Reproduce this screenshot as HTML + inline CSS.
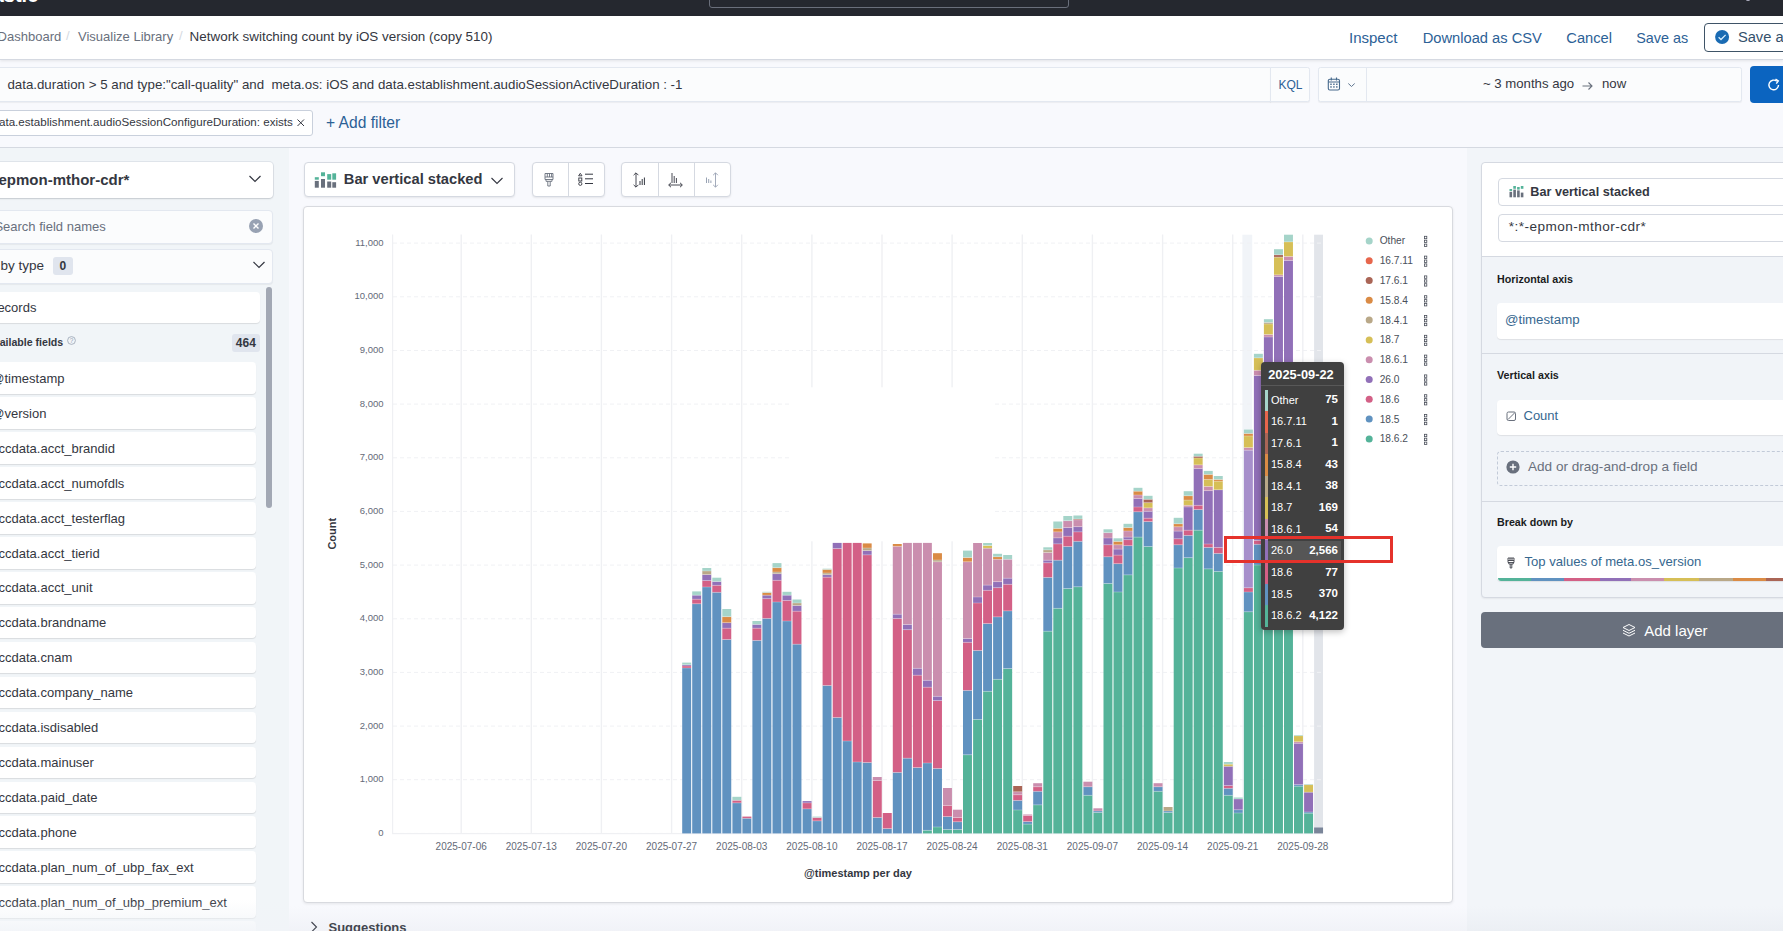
<!DOCTYPE html>
<html><head><meta charset="utf-8"><style>*{box-sizing:border-box;margin:0;padding:0}
html,body{width:1783px;height:931px;overflow:hidden;background:#f8f9fd;font-family:"Liberation Sans",sans-serif;color:#343741;position:relative}
.a{position:absolute;white-space:pre}
#hdr{position:absolute;left:0;top:0;width:1783px;height:16px;background:#25282f;overflow:hidden}
#crumb{position:absolute;left:0;top:16px;width:1783px;height:44px;background:#fff;border-bottom:1px solid #d5d9e1;box-shadow:0 1px 3px rgba(0,0,0,.09);z-index:2}
#qarea{position:absolute;left:0;top:60px;width:1783px;height:88px;background:#f8f9fd;border-bottom:1px solid #d5d9e1}
.box{position:absolute;background:#fbfcfd;border:1px solid #e3e8f0;box-shadow:0 1px 1px rgba(0,0,0,.05)}
#left{position:absolute;left:0;top:148px;width:289px;height:783px;background:#f1f5f8}
#right{position:absolute;left:1467px;top:148px;width:316px;height:783px;background:#f2f5f9}
.card{position:absolute;background:#fff;border-radius:4px;box-shadow:0 1px 2px rgba(0,0,0,.12),0 0 0 1px rgba(152,162,179,.18)}
.fi{position:absolute;left:-6px;width:262px;height:31.7px;background:#fff;border-radius:4px;box-shadow:0 1px 1px rgba(0,0,0,.10)}
.fi span{position:absolute;left:-2.7px;top:8.5px;font-size:13px;color:#343741;white-space:pre}
.tt{position:absolute;left:1261.4px;top:361.8px;width:82.6px;height:268.4px;background:#404040;border-radius:4px;box-shadow:0 2px 6px rgba(0,0,0,.25);color:#fff}
.tth{position:absolute;left:6.8px;top:4.8px;font-size:12.8px;font-weight:700;white-space:pre}
.ttd{position:absolute;left:0;top:23px;width:82.6px;height:1px;background:#585858}
.ttr{position:absolute;left:0;width:82.6px;height:21.55px}
.ttr i{position:absolute;left:3.2px;top:0;width:3.2px;height:21.6px}
.ttr .n{position:absolute;left:9.6px;top:4px;font-size:11px;white-space:pre}
.ttr .v{position:absolute;right:6px;top:3.6px;font-size:11.5px;font-weight:700;white-space:pre}
.ttr.hl{background:transparent}
.ttr.hl:before{content:"";position:absolute;left:6.4px;top:1px;width:72.8px;height:18.2px;background:#565656}
.ttr.hl .n,.ttr.hl .v{z-index:1}
.redbox{position:absolute;left:1224px;top:536px;width:169px;height:27px;border:3.7px solid #e5322b}
.lnk{color:#2c6196}
.btn{position:absolute;background:#fff;border:1px solid #d5d9e1;border-radius:4px;box-shadow:0 1px 2px rgba(0,0,0,.08)}
</style></head>
<body>
<div id="hdr">
  <div class="a" style="left:-24px;top:-16px;font-size:20px;font-weight:700;color:#fff">elastic</div><div style="position:absolute;left:1746px;top:-2px;width:4px;height:3px;border-radius:2px;background:#aab"></div>
  <div style="position:absolute;left:709px;top:-20px;width:360px;height:27.5px;border:1px solid #6a6f7b;border-radius:3px;background:#25282f"></div>
</div>
<div id="crumb">
  <div class="a" style="left:-2.4px;top:13px;font-size:13px;color:#69707d">Dashboard</div>
  <div class="a" style="left:66px;top:12px;font-size:13px;color:#d5d9e1">/</div>
  <div class="a" style="left:78px;top:13px;font-size:13px;color:#69707d">Visualize Library</div>
  <div class="a" style="left:179px;top:12px;font-size:13px;color:#d5d9e1">/</div>
  <div class="a" style="left:189.6px;top:13px;font-size:13.43px;color:#343741">Network switching count by iOS version (copy 510)</div>
  <div class="a lnk" style="left:1349px;top:13.3px;font-size:15px">Inspect</div>
  <div class="a lnk" style="left:1422.7px;top:14px;font-size:14.7px">Download as CSV</div>
  <div class="a lnk" style="left:1566.3px;top:14px;font-size:14.7px">Cancel</div>
  <div class="a lnk" style="left:1636.2px;top:14px;font-size:14.4px">Save as</div>
  <div style="position:absolute;left:1704px;top:7.4px;width:100px;height:28.6px;border:1.3px solid #3f5467;border-radius:4px;background:#fff"></div>
  <svg style="position:absolute;left:1715px;top:14px" width="15" height="15"><circle cx="7.1" cy="7" r="7" fill="#1a6bb3"/><path d="M3.6 7.2 L6 9.5 L10.6 4.9" stroke="#d9f0ff" stroke-width="1.3" fill="none"/></svg>
  <div class="a" style="left:1737.9px;top:13px;font-size:14.7px;color:#34506b">Save as</div>
</div>
<div id="qarea">
  <div class="box" style="left:-6px;top:7px;width:1277px;height:35px;border-radius:4px 0 0 4px"></div>
  <div class="a" style="left:7.4px;top:17px;font-size:13.3px;color:#343741">data.duration &gt; 5 and type:"call-quality" and  meta.os: iOS and data.establishment.audioSessionActiveDuration : -1</div>
  <div class="box" style="left:1270px;top:7px;width:40px;height:35px;border-radius:0 2.5px 2.5px 0"></div>
  <div class="a lnk" style="left:1278.5px;top:17.5px;font-size:12px">KQL</div>
  <div class="box" style="left:1318px;top:7px;width:424px;height:35px;border-radius:2.5px"></div>
  <div style="position:absolute;left:1366px;top:8px;width:1px;height:33px;background:#e3e8f0"></div>
  <svg style="position:absolute;left:1327px;top:16px" width="36" height="18">
    <rect x="1.3" y="3.2" width="11.2" height="10.8" rx="1.6" fill="none" stroke="#46698c" stroke-width="1.1"/>
    <line x1="1.3" y1="6" x2="12.5" y2="6" stroke="#46698c" stroke-width="1"/>
    <path d="M4.3 1.6 V4.4 M9.5 1.6 V4.4" stroke="#46698c" stroke-width="1.1"/>
    <g fill="#46698c"><rect x="3.2" y="7.6" width="1.6" height="1.3"/><rect x="6.1" y="7.6" width="1.6" height="1.3"/><rect x="9" y="7.6" width="1.6" height="1.3"/><rect x="3.2" y="10.3" width="1.6" height="1.3"/><rect x="6.1" y="10.3" width="1.6" height="1.3"/><rect x="9" y="10.3" width="1.6" height="1.3"/></g>
    <path d="M21.3 7.5 L24.5 10.5 L27.7 7.5" stroke="#5e7590" stroke-width="1" fill="none"/>
  </svg>
  <div class="a" style="left:1482.9px;top:16.3px;font-size:13.2px;color:#343741">~ 3 months ago</div>
  <svg style="position:absolute;left:1581px;top:19.5px" width="14" height="12"><path d="M1.5 6 H11 M7.5 2.5 L11 6 L7.5 9.5" stroke="#69707d" stroke-width="1.1" fill="none"/></svg>
  <div class="a" style="left:1602px;top:16.3px;font-size:13.2px;color:#343741">now</div>
  <div style="position:absolute;left:1750px;top:6px;width:50px;height:37px;background:#0b64c0;border-radius:4px"></div>
  <svg style="position:absolute;left:1766px;top:17px" width="16" height="16"><path d="M12.5 8 A4.8 4.8 0 1 1 10.8 4.3" stroke="#fff" stroke-width="1.4" fill="none"/><path d="M9.5 2.2 L12.3 4 L10.3 6.6" stroke="#fff" stroke-width="1.4" fill="none"/></svg>
  <div style="position:absolute;left:-6px;top:50px;width:319px;height:26px;background:#fff;border:1px solid #c9d0dc;border-radius:3px"></div>
  <div class="a" style="left:-1px;top:55px;font-size:11.6px;color:#343741">ata.establishment.audioSessionConfigureDuration: exists</div>
  <svg style="position:absolute;left:296px;top:58px" width="10" height="10"><path d="M1.5 1.5 L8 8 M8 1.5 L1.5 8" stroke="#343741" stroke-width="1"/></svg>
  <div class="a lnk" style="left:326px;top:53.5px;font-size:15.6px">+ Add filter</div>
</div>

<div id="left">
  <div class="card" style="left:-6px;top:14.3px;width:279.3px;height:35.3px"></div>
  <div class="a" style="left:-1.5px;top:22.8px;font-size:15px;font-weight:700;color:#343741">epmon-mthor-cdr*</div>
  <svg style="position:absolute;left:248px;top:26px" width="14" height="10"><path d="M1.5 2 L7 7.5 L12.5 2" stroke="#343741" stroke-width="1.2" fill="none"/></svg>
  <div class="box" style="left:-6px;top:61.5px;width:279.3px;height:34.6px;border-radius:4px"></div>
  <div class="a" style="left:-5.6px;top:71.3px;font-size:13px;color:#69707d">Search field names</div>
  <svg style="position:absolute;left:248.9px;top:71px" width="14" height="14"><circle cx="7" cy="7" r="7" fill="#98a2b3"/><path d="M4.5 4.5 L9.5 9.5 M9.5 4.5 L4.5 9.5" stroke="#fff" stroke-width="1.4"/></svg>
  <div class="box" style="left:-6px;top:100.5px;width:279.3px;height:35px;border-radius:4px"></div>
  <div class="a" style="left:-33.3px;top:110px;font-size:13.5px;color:#343741">Filter by type</div>
  <div style="position:absolute;left:53.4px;top:109.1px;width:20.1px;height:17.5px;background:#e0e5ee;border-radius:3px"></div>
  <div class="a" style="left:59.5px;top:110.5px;font-size:12px;font-weight:700;color:#343741">0</div>
  <svg style="position:absolute;left:252px;top:112px" width="14" height="10"><path d="M1.5 2 L7 7.5 L12.5 2" stroke="#343741" stroke-width="1.2" fill="none"/></svg>
  <div style="position:absolute;left:266.3px;top:139.4px;width:5.7px;height:221px;background:#a2a8b4;border-radius:3px"></div>
  <div class="fi" style="top:143.5px;width:265.8px"><span style="left:-6px">Records</span></div>
  <div class="a" style="left:-13.5px;top:187.8px;font-size:10.6px;font-weight:700;color:#343741">Available fields</div>
  <svg style="position:absolute;left:66.5px;top:188px" width="10" height="10"><circle cx="4.5" cy="4.5" r="3.9" fill="none" stroke="#98a2b3" stroke-width="0.8"/><text x="4.5" y="6.8" font-size="6.5" text-anchor="middle" fill="#98a2b3" font-family="Liberation Sans">?</text></svg>
  <div style="position:absolute;left:231.8px;top:185.8px;width:28px;height:18px;background:#e0e5ee;border-radius:3px"></div>
  <div class="a" style="left:235.8px;top:188px;font-size:12px;font-weight:700;color:#343741">464</div>
  <div class="fi" style="top:214.3px"><span>@timestamp</span></div><div class="fi" style="top:249.2px"><span>@version</span></div><div class="fi" style="top:284.2px"><span>accdata.acct_brandid</span></div><div class="fi" style="top:319.1px"><span>accdata.acct_numofdls</span></div><div class="fi" style="top:354.0px"><span>accdata.acct_testerflag</span></div><div class="fi" style="top:389.0px"><span>accdata.acct_tierid</span></div><div class="fi" style="top:423.9px"><span>accdata.acct_unit</span></div><div class="fi" style="top:458.8px"><span>accdata.brandname</span></div><div class="fi" style="top:493.7px"><span>accdata.cnam</span></div><div class="fi" style="top:528.7px"><span>accdata.company_name</span></div><div class="fi" style="top:563.6px"><span>accdata.isdisabled</span></div><div class="fi" style="top:598.5px"><span>accdata.mainuser</span></div><div class="fi" style="top:633.5px"><span>accdata.paid_date</span></div><div class="fi" style="top:668.4px"><span>accdata.phone</span></div><div class="fi" style="top:703.3px"><span>accdata.plan_num_of_ubp_fax_ext</span></div><div class="fi" style="top:738.2px"><span>accdata.plan_num_of_ubp_premium_ext</span></div><div class="fi" style="top:773.2px"><span>accdata.plan_num_of_ubp_std_ext</span></div>
  <div style="position:absolute;left:0;top:752px;width:289px;height:31px;background:linear-gradient(rgba(241,244,248,0),rgba(241,244,248,.85))"></div>
</div>



<!-- center toolbar -->
<div class="btn" style="left:303.7px;top:162.4px;width:211.7px;height:34.6px"></div>
<svg style="position:absolute;left:314px;top:171px" width="24" height="18">
  <g fill="#54B399"><rect x="0.8" y="6.2" width="4" height="2.5"/><rect x="7" y="1.3" width="4" height="3.9"/><rect x="13.2" y="3.1" width="4" height="5.6"/><rect x="18.3" y="2.3" width="3.8" height="6.4"/></g>
  <g fill="#69707d"><rect x="0.8" y="9.9" width="4" height="6.8"/><rect x="7" y="8" width="4" height="8.7"/><rect x="13.2" y="10.5" width="4" height="6.2"/><rect x="18.3" y="11.2" width="3.8" height="5.5"/></g>
</svg>
<div class="a" style="left:343.8px;top:171.2px;font-size:14.68px;font-weight:700;color:#343741">Bar vertical stacked</div>
<svg style="position:absolute;left:490px;top:176px" width="14" height="10"><path d="M1.5 2 L7 7.5 L12.5 2" stroke="#343741" stroke-width="1.1" fill="none"/></svg>

<div class="btn" style="left:531.8px;top:162.4px;width:73.4px;height:34.6px"></div>
<div style="position:absolute;left:568.3px;top:163px;width:1px;height:33.4px;background:#d5d9e1"></div>
<div class="btn" style="left:620.7px;top:162.4px;width:110.5px;height:34.6px"></div>
<div style="position:absolute;left:657.5px;top:163px;width:1px;height:33.4px;background:#d5d9e1"></div>
<div style="position:absolute;left:694.2px;top:163px;width:1px;height:33.4px;background:#d5d9e1"></div>
<svg style="position:absolute;left:541px;top:172px" width="16" height="16">
  <path d="M4 1.5 H12 V7.5 H4 Z M4 5 H12 M6.3 1.5 V5 M8.5 1.5 V5 M10.6 1.5 V5 M5 7.5 V9.3 H11 V7.5 M6.8 9.3 V14 H9.2 V9.3" stroke="#69707d" stroke-width="0.9" fill="none"/>
</svg>
<svg style="position:absolute;left:578px;top:172px" width="18" height="16">
  <path d="M2.3 1.3 L4 3.8 H0.6 Z" stroke="#343741" stroke-width="0.9" fill="none"/>
  <rect x="0.8" y="6" width="3" height="3" stroke="#343741" stroke-width="0.9" fill="none"/>
  <circle cx="2.3" cy="11.8" r="1.6" stroke="#343741" stroke-width="0.9" fill="none"/>
  <path d="M7 2.2 H15 M7 6.8 H15 M7 11.5 H15" stroke="#343741" stroke-width="1"/>
</svg>
<svg style="position:absolute;left:630px;top:171px" width="18" height="18">
  <path d="M6 2 V16 M3.6 4.2 L6 1.8 L8.4 4.2 M3.6 13.8 L6 16.2 L8.4 13.8" stroke="#343741" stroke-width="0.9" fill="none"/>
  <path d="M10 10 V14 M12.2 8 V14 M14.4 6.5 V14" stroke="#343741" stroke-width="1"/>
</svg>
<svg style="position:absolute;left:667px;top:171px" width="18" height="18">
  <path d="M5 2 V12 M7.2 5 V12 M9.4 7 V12 M2 14 H15 M4 11.8 L1.6 14 L4 16.2 M13 11.8 L15.4 14 L13 16.2" stroke="#343741" stroke-width="0.9" fill="none"/>
</svg>
<svg style="position:absolute;left:704px;top:171px" width="18" height="18">
  <path d="M11.5 2 V16 M9.1 4.2 L11.5 1.8 L13.9 4.2 M9.1 13.8 L11.5 16.2 L13.9 13.8" stroke="#98a2b3" stroke-width="0.9" fill="none"/>
  <path d="M2.5 6.5 V12 M4.7 8 V12 M6.9 9.5 V12" stroke="#98a2b3" stroke-width="1"/>
</svg>

<!-- chart panel -->
<div style="position:absolute;left:303.2px;top:205.5px;width:1149.8px;height:697.6px;background:#fff;border:1px solid #d8dadf;border-radius:4px;box-shadow:0 1px 3px rgba(0,0,0,.08)"></div>
<svg width="1783" height="931" style="position:absolute;left:0;top:0;font-family:'Liberation Sans',sans-serif"><rect x="1242.4" y="234.7" width="9.8" height="598.7" fill="#f1f4f8"/><rect x="1314.1" y="234.7" width="8.9" height="598.7" fill="#e2e5ea"/><line x1="393" y1="833.4" x2="1323" y2="833.4" stroke="#f0f1f4" stroke-width="1" stroke-dasharray="4 3"/><line x1="393" y1="779.7" x2="1323" y2="779.7" stroke="#f0f1f4" stroke-width="1" stroke-dasharray="4 3"/><line x1="393" y1="726.1" x2="1323" y2="726.1" stroke="#f0f1f4" stroke-width="1" stroke-dasharray="4 3"/><line x1="393" y1="672.4" x2="1323" y2="672.4" stroke="#f0f1f4" stroke-width="1" stroke-dasharray="4 3"/><line x1="393" y1="618.8" x2="1323" y2="618.8" stroke="#f0f1f4" stroke-width="1" stroke-dasharray="4 3"/><line x1="393" y1="565.1" x2="1323" y2="565.1" stroke="#f0f1f4" stroke-width="1" stroke-dasharray="4 3"/><line x1="393" y1="511.4" x2="1323" y2="511.4" stroke="#f0f1f4" stroke-width="1" stroke-dasharray="4 3"/><line x1="393" y1="457.8" x2="1323" y2="457.8" stroke="#f0f1f4" stroke-width="1" stroke-dasharray="4 3"/><line x1="393" y1="404.1" x2="1323" y2="404.1" stroke="#f0f1f4" stroke-width="1" stroke-dasharray="4 3"/><line x1="393" y1="350.5" x2="1323" y2="350.5" stroke="#f0f1f4" stroke-width="1" stroke-dasharray="4 3"/><line x1="393" y1="296.8" x2="1323" y2="296.8" stroke="#f0f1f4" stroke-width="1" stroke-dasharray="4 3"/><line x1="393" y1="243.1" x2="1323" y2="243.1" stroke="#f0f1f4" stroke-width="1" stroke-dasharray="4 3"/><rect x="460.5" y="234.5" width="1.4" height="598.9" fill="#eff0f3"/><rect x="530.6" y="234.5" width="1.4" height="598.9" fill="#eff0f3"/><rect x="600.7" y="234.5" width="1.4" height="598.9" fill="#eff0f3"/><rect x="670.9" y="234.5" width="1.4" height="598.9" fill="#eff0f3"/><rect x="741.0" y="234.5" width="1.4" height="598.9" fill="#eff0f3"/><rect x="811.2" y="234.5" width="1.4" height="598.9" fill="#eff0f3"/><rect x="881.3" y="234.5" width="1.4" height="598.9" fill="#eff0f3"/><rect x="951.4" y="234.5" width="1.4" height="598.9" fill="#eff0f3"/><rect x="1021.6" y="234.5" width="1.4" height="598.9" fill="#eff0f3"/><rect x="1091.7" y="234.5" width="1.4" height="598.9" fill="#eff0f3"/><rect x="1161.9" y="234.5" width="1.4" height="598.9" fill="#eff0f3"/><rect x="1232.0" y="234.5" width="1.4" height="598.9" fill="#eff0f3"/><rect x="1302.1" y="234.5" width="1.4" height="598.9" fill="#eff0f3"/><rect x="392" y="234.5" width="1.2" height="598.9" fill="#eff0f3"/><rect x="392" y="833.0" width="931" height="1.2" fill="#eff0f3"/><rect x="791" y="387.3" width="203.5" height="154" fill="#fff"/><rect x="682.2" y="668.0" width="8.95" height="165.4" fill="#6092C0"/><rect x="682.2" y="666.0" width="8.95" height="2.0" fill="#D36086"/><rect x="682.2" y="664.8" width="8.95" height="1.2" fill="#9170B8"/><rect x="682.2" y="662.6" width="8.95" height="2.2" fill="#A5D4C9"/><rect x="692.2" y="603.8" width="8.95" height="229.6" fill="#6092C0"/><rect x="692.2" y="599.2" width="8.95" height="4.6" fill="#D36086"/><rect x="692.2" y="595.2" width="8.95" height="4.0" fill="#9170B8"/><rect x="692.2" y="591.4" width="8.95" height="3.8" fill="#A5D4C9"/><rect x="702.3" y="587.0" width="8.95" height="246.4" fill="#6092C0"/><rect x="702.3" y="580.6" width="8.95" height="6.4" fill="#D36086"/><rect x="702.3" y="574.6" width="8.95" height="6.0" fill="#9170B8"/><rect x="702.3" y="571.0" width="8.95" height="3.6" fill="#B9A888"/><rect x="702.3" y="568.0" width="8.95" height="3.0" fill="#A5D4C9"/><rect x="712.3" y="592.3" width="8.95" height="241.1" fill="#6092C0"/><rect x="712.3" y="585.3" width="8.95" height="7.0" fill="#D36086"/><rect x="712.3" y="581.5" width="8.95" height="3.8" fill="#9170B8"/><rect x="712.3" y="577.7" width="8.95" height="3.8" fill="#A5D4C9"/><rect x="722.3" y="639.5" width="8.95" height="193.9" fill="#6092C0"/><rect x="722.3" y="628.2" width="8.95" height="11.3" fill="#D36086"/><rect x="722.3" y="622.7" width="8.95" height="5.5" fill="#9170B8"/><rect x="722.3" y="616.7" width="8.95" height="6.0" fill="#DA8B45"/><rect x="722.3" y="609.0" width="8.95" height="7.7" fill="#A5D4C9"/><rect x="732.4" y="802.9" width="8.95" height="30.5" fill="#6092C0"/><rect x="732.4" y="800.3" width="8.95" height="2.6" fill="#D36086"/><rect x="732.4" y="796.8" width="8.95" height="3.5" fill="#A5D4C9"/><rect x="742.4" y="818.3" width="8.95" height="15.1" fill="#6092C0"/><rect x="742.4" y="816.6" width="8.95" height="1.7" fill="#D36086"/><rect x="752.4" y="640.4" width="8.95" height="193.0" fill="#6092C0"/><rect x="752.4" y="628.2" width="8.95" height="12.2" fill="#D36086"/><rect x="752.4" y="624.4" width="8.95" height="3.8" fill="#9170B8"/><rect x="752.4" y="621.0" width="8.95" height="3.4" fill="#A5D4C9"/><rect x="762.4" y="618.4" width="8.95" height="215.0" fill="#6092C0"/><rect x="762.4" y="598.7" width="8.95" height="19.7" fill="#D36086"/><rect x="762.4" y="595.2" width="8.95" height="3.5" fill="#9170B8"/><rect x="762.4" y="592.6" width="8.95" height="2.6" fill="#DA8B45"/><rect x="762.4" y="591.8" width="8.95" height="0.8" fill="#A5D4C9"/><rect x="772.5" y="602.0" width="8.95" height="231.4" fill="#6092C0"/><rect x="772.5" y="580.3" width="8.95" height="21.7" fill="#D36086"/><rect x="772.5" y="573.7" width="8.95" height="6.6" fill="#9170B8"/><rect x="772.5" y="572.0" width="8.95" height="1.7" fill="#B9A888"/><rect x="772.5" y="567.7" width="8.95" height="4.3" fill="#DA8B45"/><rect x="772.5" y="563.1" width="8.95" height="4.6" fill="#A5D4C9"/><rect x="782.5" y="621.0" width="8.95" height="212.4" fill="#6092C0"/><rect x="782.5" y="600.4" width="8.95" height="20.6" fill="#D36086"/><rect x="782.5" y="595.2" width="8.95" height="5.2" fill="#9170B8"/><rect x="782.5" y="591.8" width="8.95" height="3.4" fill="#A5D4C9"/><rect x="792.5" y="644.2" width="8.95" height="189.2" fill="#6092C0"/><rect x="792.5" y="611.2" width="8.95" height="33.0" fill="#D36086"/><rect x="792.5" y="605.5" width="8.95" height="5.7" fill="#9170B8"/><rect x="792.5" y="603.0" width="8.95" height="2.5" fill="#B9A888"/><rect x="792.5" y="599.5" width="8.95" height="3.5" fill="#A5D4C9"/><rect x="802.6" y="808.9" width="8.95" height="24.5" fill="#6092C0"/><rect x="802.6" y="802.9" width="8.95" height="6.0" fill="#D36086"/><rect x="802.6" y="801.1" width="8.95" height="1.8" fill="#9170B8"/><rect x="812.6" y="820.9" width="8.95" height="12.5" fill="#6092C0"/><rect x="812.6" y="817.5" width="8.95" height="3.4" fill="#D36086"/><rect x="812.6" y="816.6" width="8.95" height="0.9" fill="#A5D4C9"/><rect x="822.6" y="685.5" width="8.95" height="147.9" fill="#6092C0"/><rect x="822.6" y="577.2" width="8.95" height="108.3" fill="#D36086"/><rect x="822.6" y="574.7" width="8.95" height="2.5" fill="#9170B8"/><rect x="822.6" y="573.0" width="8.95" height="1.7" fill="#B9A888"/><rect x="822.6" y="569.5" width="8.95" height="3.5" fill="#DA8B45"/><rect x="822.6" y="568.7" width="8.95" height="0.8" fill="#A5D4C9"/><rect x="832.7" y="717.5" width="8.95" height="115.9" fill="#6092C0"/><rect x="832.7" y="548.6" width="8.95" height="168.9" fill="#D36086"/><rect x="832.7" y="542.9" width="8.95" height="5.7" fill="#9170B8"/><rect x="842.7" y="741.0" width="8.95" height="92.4" fill="#6092C0"/><rect x="842.7" y="542.9" width="8.95" height="198.1" fill="#D36086"/><rect x="852.7" y="762.0" width="8.95" height="71.4" fill="#6092C0"/><rect x="852.7" y="542.9" width="8.95" height="219.1" fill="#D36086"/><rect x="862.7" y="762.5" width="8.95" height="70.9" fill="#6092C0"/><rect x="862.7" y="554.9" width="8.95" height="207.6" fill="#D36086"/><rect x="862.7" y="550.6" width="8.95" height="4.3" fill="#9170B8"/><rect x="862.7" y="548.0" width="8.95" height="2.6" fill="#B9A888"/><rect x="862.7" y="543.4" width="8.95" height="4.6" fill="#DA8B45"/><rect x="872.8" y="817.5" width="8.95" height="15.9" fill="#6092C0"/><rect x="872.8" y="780.5" width="8.95" height="37.0" fill="#D36086"/><rect x="872.8" y="777.0" width="8.95" height="3.5" fill="#CA8EAE"/><rect x="882.8" y="828.6" width="8.95" height="4.8" fill="#6092C0"/><rect x="882.8" y="813.0" width="8.95" height="15.6" fill="#D36086"/><rect x="892.8" y="772.4" width="8.95" height="61.0" fill="#6092C0"/><rect x="892.8" y="618.5" width="8.95" height="153.9" fill="#D36086"/><rect x="892.8" y="614.2" width="8.95" height="4.3" fill="#9170B8"/><rect x="892.8" y="546.3" width="8.95" height="67.9" fill="#CA8EAE"/><rect x="892.8" y="544.0" width="8.95" height="2.3" fill="#DA8B45"/><rect x="902.9" y="758.2" width="8.95" height="75.2" fill="#6092C0"/><rect x="902.9" y="629.7" width="8.95" height="128.5" fill="#D36086"/><rect x="902.9" y="624.5" width="8.95" height="5.2" fill="#9170B8"/><rect x="902.9" y="542.9" width="8.95" height="81.6" fill="#CA8EAE"/><rect x="912.9" y="767.6" width="8.95" height="65.8" fill="#6092C0"/><rect x="912.9" y="675.2" width="8.95" height="92.4" fill="#D36086"/><rect x="912.9" y="668.3" width="8.95" height="6.9" fill="#9170B8"/><rect x="912.9" y="542.9" width="8.95" height="125.4" fill="#CA8EAE"/><rect x="922.9" y="830.3" width="8.95" height="3.1" fill="#54B399"/><rect x="922.9" y="763.0" width="8.95" height="67.3" fill="#6092C0"/><rect x="922.9" y="687.2" width="8.95" height="75.8" fill="#D36086"/><rect x="922.9" y="680.3" width="8.95" height="6.9" fill="#9170B8"/><rect x="922.9" y="542.9" width="8.95" height="137.4" fill="#CA8EAE"/><rect x="933.0" y="827.0" width="8.95" height="6.4" fill="#54B399"/><rect x="933.0" y="768.5" width="8.95" height="58.5" fill="#6092C0"/><rect x="933.0" y="700.6" width="8.95" height="67.9" fill="#D36086"/><rect x="933.0" y="696.3" width="8.95" height="4.3" fill="#9170B8"/><rect x="933.0" y="561.8" width="8.95" height="134.5" fill="#CA8EAE"/><rect x="933.0" y="560.0" width="8.95" height="1.8" fill="#B9A888"/><rect x="933.0" y="553.2" width="8.95" height="6.8" fill="#DA8B45"/><rect x="943.0" y="829.5" width="8.95" height="3.9" fill="#54B399"/><rect x="943.0" y="816.6" width="8.95" height="12.9" fill="#6092C0"/><rect x="943.0" y="805.4" width="8.95" height="11.2" fill="#D36086"/><rect x="943.0" y="788.0" width="8.95" height="17.4" fill="#CA8EAE"/><rect x="953.0" y="829.5" width="8.95" height="3.9" fill="#54B399"/><rect x="953.0" y="821.8" width="8.95" height="7.7" fill="#6092C0"/><rect x="953.0" y="817.5" width="8.95" height="4.3" fill="#D36086"/><rect x="953.0" y="809.7" width="8.95" height="7.8" fill="#CA8EAE"/><rect x="963.0" y="754.8" width="8.95" height="78.6" fill="#54B399"/><rect x="963.0" y="690.4" width="8.95" height="64.4" fill="#6092C0"/><rect x="963.0" y="642.3" width="8.95" height="48.1" fill="#D36086"/><rect x="963.0" y="638.5" width="8.95" height="3.8" fill="#9170B8"/><rect x="963.0" y="561.8" width="8.95" height="76.7" fill="#CA8EAE"/><rect x="963.0" y="557.5" width="8.95" height="4.3" fill="#DA8B45"/><rect x="963.0" y="550.6" width="8.95" height="6.9" fill="#A5D4C9"/><rect x="973.1" y="719.4" width="8.95" height="114.0" fill="#54B399"/><rect x="973.1" y="650.5" width="8.95" height="68.9" fill="#6092C0"/><rect x="973.1" y="603.0" width="8.95" height="47.5" fill="#D36086"/><rect x="973.1" y="597.0" width="8.95" height="6.0" fill="#9170B8"/><rect x="973.1" y="543.0" width="8.95" height="54.0" fill="#CA8EAE"/><rect x="983.1" y="691.3" width="8.95" height="142.1" fill="#54B399"/><rect x="983.1" y="623.6" width="8.95" height="67.7" fill="#6092C0"/><rect x="983.1" y="590.3" width="8.95" height="33.3" fill="#D36086"/><rect x="983.1" y="585.1" width="8.95" height="5.2" fill="#9170B8"/><rect x="983.1" y="548.2" width="8.95" height="36.9" fill="#CA8EAE"/><rect x="983.1" y="545.6" width="8.95" height="2.6" fill="#D6BF57"/><rect x="983.1" y="543.0" width="8.95" height="2.6" fill="#A5D4C9"/><rect x="993.1" y="679.3" width="8.95" height="154.1" fill="#54B399"/><rect x="993.1" y="616.9" width="8.95" height="62.4" fill="#6092C0"/><rect x="993.1" y="587.7" width="8.95" height="29.2" fill="#D36086"/><rect x="993.1" y="581.7" width="8.95" height="6.0" fill="#9170B8"/><rect x="993.1" y="559.3" width="8.95" height="22.4" fill="#CA8EAE"/><rect x="993.1" y="556.8" width="8.95" height="2.5" fill="#DA8B45"/><rect x="993.1" y="553.8" width="8.95" height="3.0" fill="#A5D4C9"/><rect x="1003.2" y="668.6" width="8.95" height="164.8" fill="#54B399"/><rect x="1003.2" y="610.9" width="8.95" height="57.7" fill="#6092C0"/><rect x="1003.2" y="584.3" width="8.95" height="26.6" fill="#D36086"/><rect x="1003.2" y="578.2" width="8.95" height="6.1" fill="#9170B8"/><rect x="1003.2" y="559.3" width="8.95" height="18.9" fill="#CA8EAE"/><rect x="1003.2" y="555.0" width="8.95" height="4.3" fill="#A5D4C9"/><rect x="1013.2" y="810.0" width="8.95" height="23.4" fill="#54B399"/><rect x="1013.2" y="800.4" width="8.95" height="9.6" fill="#6092C0"/><rect x="1013.2" y="794.8" width="8.95" height="5.6" fill="#D36086"/><rect x="1013.2" y="791.8" width="8.95" height="3.0" fill="#CA8EAE"/><rect x="1013.2" y="786.0" width="8.95" height="5.8" fill="#AA6556"/><rect x="1023.2" y="824.1" width="8.95" height="9.3" fill="#54B399"/><rect x="1023.2" y="821.6" width="8.95" height="2.5" fill="#6092C0"/><rect x="1023.2" y="815.5" width="8.95" height="6.1" fill="#D36086"/><rect x="1023.2" y="814.5" width="8.95" height="1.0" fill="#CA8EAE"/><rect x="1033.2" y="804.9" width="8.95" height="28.5" fill="#54B399"/><rect x="1033.2" y="791.3" width="8.95" height="13.6" fill="#6092C0"/><rect x="1033.2" y="786.8" width="8.95" height="4.5" fill="#D36086"/><rect x="1033.2" y="783.2" width="8.95" height="3.6" fill="#CA8EAE"/><rect x="1043.3" y="631.2" width="8.95" height="202.2" fill="#54B399"/><rect x="1043.3" y="577.4" width="8.95" height="53.8" fill="#6092C0"/><rect x="1043.3" y="562.8" width="8.95" height="14.6" fill="#D36086"/><rect x="1043.3" y="560.2" width="8.95" height="2.6" fill="#9170B8"/><rect x="1043.3" y="552.5" width="8.95" height="7.7" fill="#CA8EAE"/><rect x="1043.3" y="549.9" width="8.95" height="2.6" fill="#B9A888"/><rect x="1043.3" y="547.3" width="8.95" height="2.6" fill="#A5D4C9"/><rect x="1053.3" y="608.3" width="8.95" height="225.1" fill="#54B399"/><rect x="1053.3" y="560.2" width="8.95" height="48.1" fill="#6092C0"/><rect x="1053.3" y="543.9" width="8.95" height="16.3" fill="#D36086"/><rect x="1053.3" y="537.9" width="8.95" height="6.0" fill="#9170B8"/><rect x="1053.3" y="531.9" width="8.95" height="6.0" fill="#CA8EAE"/><rect x="1053.3" y="528.4" width="8.95" height="3.5" fill="#DA8B45"/><rect x="1053.3" y="521.5" width="8.95" height="6.9" fill="#A5D4C9"/><rect x="1063.3" y="588.6" width="8.95" height="244.8" fill="#54B399"/><rect x="1063.3" y="546.5" width="8.95" height="42.1" fill="#6092C0"/><rect x="1063.3" y="536.2" width="8.95" height="10.3" fill="#D36086"/><rect x="1063.3" y="527.6" width="8.95" height="8.6" fill="#9170B8"/><rect x="1063.3" y="520.7" width="8.95" height="6.9" fill="#CA8EAE"/><rect x="1063.3" y="516.0" width="8.95" height="4.7" fill="#A5D4C9"/><rect x="1073.4" y="586.8" width="8.95" height="246.6" fill="#54B399"/><rect x="1073.4" y="541.3" width="8.95" height="45.5" fill="#6092C0"/><rect x="1073.4" y="531.9" width="8.95" height="9.4" fill="#D36086"/><rect x="1073.4" y="526.7" width="8.95" height="5.2" fill="#9170B8"/><rect x="1073.4" y="519.8" width="8.95" height="6.9" fill="#CA8EAE"/><rect x="1073.4" y="519.0" width="8.95" height="0.8" fill="#AA6556"/><rect x="1073.4" y="515.5" width="8.95" height="3.5" fill="#A5D4C9"/><rect x="1083.4" y="795.3" width="8.95" height="38.1" fill="#54B399"/><rect x="1083.4" y="786.8" width="8.95" height="8.5" fill="#6092C0"/><rect x="1083.4" y="781.7" width="8.95" height="5.1" fill="#CA8EAE"/><rect x="1093.4" y="812.5" width="8.95" height="20.9" fill="#54B399"/><rect x="1093.4" y="811.0" width="8.95" height="1.5" fill="#6092C0"/><rect x="1093.4" y="808.3" width="8.95" height="2.7" fill="#CA8EAE"/><rect x="1103.5" y="583.5" width="8.95" height="249.9" fill="#54B399"/><rect x="1103.5" y="556.8" width="8.95" height="26.7" fill="#6092C0"/><rect x="1103.5" y="544.8" width="8.95" height="12.0" fill="#D36086"/><rect x="1103.5" y="538.0" width="8.95" height="6.8" fill="#9170B8"/><rect x="1103.5" y="532.7" width="8.95" height="5.3" fill="#CA8EAE"/><rect x="1103.5" y="529.3" width="8.95" height="3.4" fill="#A5D4C9"/><rect x="1113.5" y="592.0" width="8.95" height="241.4" fill="#54B399"/><rect x="1113.5" y="563.7" width="8.95" height="28.3" fill="#6092C0"/><rect x="1113.5" y="555.1" width="8.95" height="8.6" fill="#D36086"/><rect x="1113.5" y="549.1" width="8.95" height="6.0" fill="#9170B8"/><rect x="1113.5" y="544.8" width="8.95" height="4.3" fill="#CA8EAE"/><rect x="1113.5" y="541.4" width="8.95" height="3.4" fill="#DA8B45"/><rect x="1113.5" y="538.3" width="8.95" height="3.1" fill="#A5D4C9"/><rect x="1123.5" y="574.9" width="8.95" height="258.5" fill="#54B399"/><rect x="1123.5" y="545.7" width="8.95" height="29.2" fill="#6092C0"/><rect x="1123.5" y="539.7" width="8.95" height="6.0" fill="#D36086"/><rect x="1123.5" y="537.1" width="8.95" height="2.6" fill="#9170B8"/><rect x="1123.5" y="531.0" width="8.95" height="6.1" fill="#CA8EAE"/><rect x="1123.5" y="527.6" width="8.95" height="3.4" fill="#DA8B45"/><rect x="1123.5" y="523.8" width="8.95" height="3.8" fill="#A5D4C9"/><rect x="1133.5" y="537.1" width="8.95" height="296.3" fill="#54B399"/><rect x="1133.5" y="511.8" width="8.95" height="25.3" fill="#6092C0"/><rect x="1133.5" y="507.0" width="8.95" height="4.8" fill="#D36086"/><rect x="1133.5" y="498.4" width="8.95" height="8.6" fill="#9170B8"/><rect x="1133.5" y="495.0" width="8.95" height="3.4" fill="#CA8EAE"/><rect x="1133.5" y="491.2" width="8.95" height="3.8" fill="#DA8B45"/><rect x="1133.5" y="487.8" width="8.95" height="3.4" fill="#A5D4C9"/><rect x="1143.6" y="546.5" width="8.95" height="286.9" fill="#54B399"/><rect x="1143.6" y="521.6" width="8.95" height="24.9" fill="#6092C0"/><rect x="1143.6" y="518.2" width="8.95" height="3.4" fill="#D36086"/><rect x="1143.6" y="511.3" width="8.95" height="6.9" fill="#9170B8"/><rect x="1143.6" y="507.9" width="8.95" height="3.4" fill="#CA8EAE"/><rect x="1143.6" y="502.7" width="8.95" height="5.2" fill="#D6BF57"/><rect x="1143.6" y="499.3" width="8.95" height="3.4" fill="#AA6556"/><rect x="1143.6" y="495.8" width="8.95" height="3.5" fill="#A5D4C9"/><rect x="1153.6" y="791.3" width="8.95" height="42.1" fill="#54B399"/><rect x="1153.6" y="786.8" width="8.95" height="4.5" fill="#6092C0"/><rect x="1153.6" y="783.2" width="8.95" height="3.6" fill="#CA8EAE"/><rect x="1163.6" y="812.5" width="8.95" height="20.9" fill="#54B399"/><rect x="1163.6" y="811.0" width="8.95" height="1.5" fill="#6092C0"/><rect x="1163.6" y="807.0" width="8.95" height="4.0" fill="#B9A888"/><rect x="1173.7" y="568.0" width="8.95" height="265.4" fill="#54B399"/><rect x="1173.7" y="544.8" width="8.95" height="23.2" fill="#6092C0"/><rect x="1173.7" y="538.8" width="8.95" height="6.0" fill="#D36086"/><rect x="1173.7" y="531.1" width="8.95" height="7.7" fill="#9170B8"/><rect x="1173.7" y="526.8" width="8.95" height="4.3" fill="#CA8EAE"/><rect x="1173.7" y="523.8" width="8.95" height="3.0" fill="#DA8B45"/><rect x="1173.7" y="517.8" width="8.95" height="6.0" fill="#A5D4C9"/><rect x="1183.7" y="557.7" width="8.95" height="275.7" fill="#54B399"/><rect x="1183.7" y="535.4" width="8.95" height="22.3" fill="#6092C0"/><rect x="1183.7" y="530.2" width="8.95" height="5.2" fill="#D36086"/><rect x="1183.7" y="507.0" width="8.95" height="23.2" fill="#9170B8"/><rect x="1183.7" y="505.3" width="8.95" height="1.7" fill="#CA8EAE"/><rect x="1183.7" y="500.1" width="8.95" height="5.2" fill="#D6BF57"/><rect x="1183.7" y="495.8" width="8.95" height="4.3" fill="#DA8B45"/><rect x="1183.7" y="491.2" width="8.95" height="4.6" fill="#A5D4C9"/><rect x="1193.7" y="530.2" width="8.95" height="303.2" fill="#54B399"/><rect x="1193.7" y="509.6" width="8.95" height="20.6" fill="#6092C0"/><rect x="1193.7" y="505.3" width="8.95" height="4.3" fill="#D36086"/><rect x="1193.7" y="468.4" width="8.95" height="36.9" fill="#9170B8"/><rect x="1193.7" y="464.9" width="8.95" height="3.5" fill="#CA8EAE"/><rect x="1193.7" y="458.0" width="8.95" height="6.9" fill="#D6BF57"/><rect x="1193.7" y="456.3" width="8.95" height="1.7" fill="#AA6556"/><rect x="1193.7" y="453.7" width="8.95" height="2.6" fill="#A5D4C9"/><rect x="1203.8" y="568.9" width="8.95" height="264.5" fill="#54B399"/><rect x="1203.8" y="547.4" width="8.95" height="21.5" fill="#6092C0"/><rect x="1203.8" y="544.0" width="8.95" height="3.4" fill="#D36086"/><rect x="1203.8" y="490.7" width="8.95" height="53.3" fill="#9170B8"/><rect x="1203.8" y="486.4" width="8.95" height="4.3" fill="#CA8EAE"/><rect x="1203.8" y="479.5" width="8.95" height="6.9" fill="#D6BF57"/><rect x="1203.8" y="474.4" width="8.95" height="5.1" fill="#DA8B45"/><rect x="1203.8" y="470.9" width="8.95" height="3.5" fill="#A5D4C9"/><rect x="1213.8" y="571.4" width="8.95" height="262.0" fill="#54B399"/><rect x="1213.8" y="553.4" width="8.95" height="18.0" fill="#6092C0"/><rect x="1213.8" y="547.4" width="8.95" height="6.0" fill="#D36086"/><rect x="1213.8" y="489.8" width="8.95" height="57.6" fill="#9170B8"/><rect x="1213.8" y="481.2" width="8.95" height="8.6" fill="#D6BF57"/><rect x="1213.8" y="479.5" width="8.95" height="1.7" fill="#DA8B45"/><rect x="1213.8" y="476.0" width="8.95" height="3.5" fill="#A5D4C9"/><rect x="1223.8" y="795.3" width="8.95" height="38.1" fill="#54B399"/><rect x="1223.8" y="788.3" width="8.95" height="7.0" fill="#6092C0"/><rect x="1223.8" y="785.6" width="8.95" height="2.7" fill="#D36086"/><rect x="1223.8" y="766.3" width="8.95" height="19.3" fill="#9170B8"/><rect x="1223.8" y="764.2" width="8.95" height="2.1" fill="#D6BF57"/><rect x="1223.8" y="762.0" width="8.95" height="2.2" fill="#A5D4C9"/><rect x="1233.8" y="813.0" width="8.95" height="20.4" fill="#54B399"/><rect x="1233.8" y="809.8" width="8.95" height="3.2" fill="#6092C0"/><rect x="1233.8" y="799.0" width="8.95" height="10.8" fill="#9170B8"/><rect x="1233.8" y="797.5" width="8.95" height="1.5" fill="#A5D4C9"/><rect x="1243.9" y="611.8" width="8.95" height="221.6" fill="#54B399"/><rect x="1243.9" y="592.0" width="8.95" height="19.8" fill="#6092C0"/><rect x="1243.9" y="587.8" width="8.95" height="4.2" fill="#D36086"/><rect x="1243.9" y="450.2" width="8.95" height="137.6" fill="#A68FCB"/><rect x="1243.9" y="447.6" width="8.95" height="2.6" fill="#CA8EAE"/><rect x="1243.9" y="436.0" width="8.95" height="11.6" fill="#D6BF57"/><rect x="1243.9" y="433.5" width="8.95" height="2.5" fill="#DA8B45"/><rect x="1243.9" y="429.6" width="8.95" height="3.9" fill="#A5D4C9"/><rect x="1253.9" y="565.0" width="8.95" height="268.4" fill="#54B399"/><rect x="1253.9" y="544.3" width="8.95" height="20.7" fill="#6092C0"/><rect x="1253.9" y="540.4" width="8.95" height="3.9" fill="#D36086"/><rect x="1253.9" y="375.5" width="8.95" height="164.9" fill="#9170B8"/><rect x="1253.9" y="370.3" width="8.95" height="5.2" fill="#CA8EAE"/><rect x="1253.9" y="357.9" width="8.95" height="12.4" fill="#D6BF57"/><rect x="1253.9" y="353.8" width="8.95" height="4.1" fill="#A5D4C9"/><rect x="1263.9" y="600.0" width="8.95" height="233.4" fill="#54B399"/><rect x="1263.9" y="580.0" width="8.95" height="20.0" fill="#6092C0"/><rect x="1263.9" y="576.0" width="8.95" height="4.0" fill="#D36086"/><rect x="1263.9" y="337.0" width="8.95" height="239.0" fill="#9170B8"/><rect x="1263.9" y="334.5" width="8.95" height="2.5" fill="#CA8EAE"/><rect x="1263.9" y="324.0" width="8.95" height="10.5" fill="#D6BF57"/><rect x="1263.9" y="322.4" width="8.95" height="1.6" fill="#B9A888"/><rect x="1263.9" y="319.2" width="8.95" height="3.2" fill="#A5D4C9"/><rect x="1274.0" y="590.0" width="8.95" height="243.4" fill="#54B399"/><rect x="1274.0" y="570.0" width="8.95" height="20.0" fill="#6092C0"/><rect x="1274.0" y="566.0" width="8.95" height="4.0" fill="#D36086"/><rect x="1274.0" y="276.5" width="8.95" height="289.5" fill="#9170B8"/><rect x="1274.0" y="274.9" width="8.95" height="1.6" fill="#CA8EAE"/><rect x="1274.0" y="257.2" width="8.95" height="17.7" fill="#D6BF57"/><rect x="1274.0" y="254.8" width="8.95" height="2.4" fill="#AA6556"/><rect x="1274.0" y="249.2" width="8.95" height="5.6" fill="#A5D4C9"/><rect x="1284.0" y="580.0" width="8.95" height="253.4" fill="#54B399"/><rect x="1284.0" y="560.0" width="8.95" height="20.0" fill="#6092C0"/><rect x="1284.0" y="556.0" width="8.95" height="4.0" fill="#D36086"/><rect x="1284.0" y="260.4" width="8.95" height="295.6" fill="#9170B8"/><rect x="1284.0" y="256.4" width="8.95" height="4.0" fill="#CA8EAE"/><rect x="1284.0" y="241.9" width="8.95" height="14.5" fill="#D6BF57"/><rect x="1284.0" y="234.7" width="8.95" height="7.2" fill="#A5D4C9"/><rect x="1294.0" y="786.2" width="8.95" height="47.2" fill="#54B399"/><rect x="1294.0" y="784.7" width="8.95" height="1.5" fill="#6092C0"/><rect x="1294.0" y="743.3" width="8.95" height="41.4" fill="#9170B8"/><rect x="1294.0" y="741.8" width="8.95" height="1.5" fill="#CA8EAE"/><rect x="1294.0" y="735.8" width="8.95" height="6.0" fill="#D6BF57"/><rect x="1294.0" y="735.0" width="8.95" height="0.8" fill="#A5D4C9"/><rect x="1304.1" y="813.2" width="8.95" height="20.2" fill="#54B399"/><rect x="1304.1" y="812.0" width="8.95" height="1.2" fill="#6092C0"/><rect x="1304.1" y="792.2" width="8.95" height="19.8" fill="#9170B8"/><rect x="1304.1" y="784.7" width="8.95" height="7.5" fill="#D6BF57"/><rect x="1304.1" y="784.0" width="8.95" height="0.7" fill="#A5D4C9"/><rect x="1314.1" y="827.5" width="8.95" height="5.9" fill="#7a8599"/><rect x="682.2" y="667.6" width="8.95" height="0.8" fill="rgba(255,255,255,0.35)"/><rect x="682.2" y="665.6" width="8.95" height="0.8" fill="rgba(255,255,255,0.35)"/><rect x="682.2" y="664.4" width="8.95" height="0.8" fill="rgba(255,255,255,0.35)"/><rect x="692.2" y="603.4" width="8.95" height="0.8" fill="rgba(255,255,255,0.35)"/><rect x="692.2" y="598.8" width="8.95" height="0.8" fill="rgba(255,255,255,0.35)"/><rect x="692.2" y="594.8" width="8.95" height="0.8" fill="rgba(255,255,255,0.35)"/><rect x="702.3" y="586.6" width="8.95" height="0.8" fill="rgba(255,255,255,0.35)"/><rect x="702.3" y="580.2" width="8.95" height="0.8" fill="rgba(255,255,255,0.35)"/><rect x="702.3" y="574.2" width="8.95" height="0.8" fill="rgba(255,255,255,0.35)"/><rect x="702.3" y="570.6" width="8.95" height="0.8" fill="rgba(255,255,255,0.35)"/><rect x="712.3" y="591.9" width="8.95" height="0.8" fill="rgba(255,255,255,0.35)"/><rect x="712.3" y="584.9" width="8.95" height="0.8" fill="rgba(255,255,255,0.35)"/><rect x="712.3" y="581.1" width="8.95" height="0.8" fill="rgba(255,255,255,0.35)"/><rect x="722.3" y="639.1" width="8.95" height="0.8" fill="rgba(255,255,255,0.35)"/><rect x="722.3" y="627.8" width="8.95" height="0.8" fill="rgba(255,255,255,0.35)"/><rect x="722.3" y="622.3" width="8.95" height="0.8" fill="rgba(255,255,255,0.35)"/><rect x="722.3" y="616.3" width="8.95" height="0.8" fill="rgba(255,255,255,0.35)"/><rect x="732.4" y="802.5" width="8.95" height="0.8" fill="rgba(255,255,255,0.35)"/><rect x="732.4" y="799.9" width="8.95" height="0.8" fill="rgba(255,255,255,0.35)"/><rect x="742.4" y="817.9" width="8.95" height="0.8" fill="rgba(255,255,255,0.35)"/><rect x="752.4" y="640.0" width="8.95" height="0.8" fill="rgba(255,255,255,0.35)"/><rect x="752.4" y="627.8" width="8.95" height="0.8" fill="rgba(255,255,255,0.35)"/><rect x="752.4" y="624.0" width="8.95" height="0.8" fill="rgba(255,255,255,0.35)"/><rect x="762.4" y="618.0" width="8.95" height="0.8" fill="rgba(255,255,255,0.35)"/><rect x="762.4" y="598.3" width="8.95" height="0.8" fill="rgba(255,255,255,0.35)"/><rect x="762.4" y="594.8" width="8.95" height="0.8" fill="rgba(255,255,255,0.35)"/><rect x="762.4" y="592.2" width="8.95" height="0.8" fill="rgba(255,255,255,0.35)"/><rect x="772.5" y="601.6" width="8.95" height="0.8" fill="rgba(255,255,255,0.35)"/><rect x="772.5" y="579.9" width="8.95" height="0.8" fill="rgba(255,255,255,0.35)"/><rect x="772.5" y="573.3" width="8.95" height="0.8" fill="rgba(255,255,255,0.35)"/><rect x="772.5" y="571.6" width="8.95" height="0.8" fill="rgba(255,255,255,0.35)"/><rect x="772.5" y="567.3" width="8.95" height="0.8" fill="rgba(255,255,255,0.35)"/><rect x="782.5" y="620.6" width="8.95" height="0.8" fill="rgba(255,255,255,0.35)"/><rect x="782.5" y="600.0" width="8.95" height="0.8" fill="rgba(255,255,255,0.35)"/><rect x="782.5" y="594.8" width="8.95" height="0.8" fill="rgba(255,255,255,0.35)"/><rect x="792.5" y="643.8" width="8.95" height="0.8" fill="rgba(255,255,255,0.35)"/><rect x="792.5" y="610.8" width="8.95" height="0.8" fill="rgba(255,255,255,0.35)"/><rect x="792.5" y="605.1" width="8.95" height="0.8" fill="rgba(255,255,255,0.35)"/><rect x="792.5" y="602.6" width="8.95" height="0.8" fill="rgba(255,255,255,0.35)"/><rect x="802.6" y="808.5" width="8.95" height="0.8" fill="rgba(255,255,255,0.35)"/><rect x="802.6" y="802.5" width="8.95" height="0.8" fill="rgba(255,255,255,0.35)"/><rect x="812.6" y="820.5" width="8.95" height="0.8" fill="rgba(255,255,255,0.35)"/><rect x="812.6" y="817.1" width="8.95" height="0.8" fill="rgba(255,255,255,0.35)"/><rect x="822.6" y="685.1" width="8.95" height="0.8" fill="rgba(255,255,255,0.35)"/><rect x="822.6" y="576.8" width="8.95" height="0.8" fill="rgba(255,255,255,0.35)"/><rect x="822.6" y="574.3" width="8.95" height="0.8" fill="rgba(255,255,255,0.35)"/><rect x="822.6" y="572.6" width="8.95" height="0.8" fill="rgba(255,255,255,0.35)"/><rect x="822.6" y="569.1" width="8.95" height="0.8" fill="rgba(255,255,255,0.35)"/><rect x="832.7" y="717.1" width="8.95" height="0.8" fill="rgba(255,255,255,0.35)"/><rect x="832.7" y="548.2" width="8.95" height="0.8" fill="rgba(255,255,255,0.35)"/><rect x="842.7" y="740.6" width="8.95" height="0.8" fill="rgba(255,255,255,0.35)"/><rect x="852.7" y="761.6" width="8.95" height="0.8" fill="rgba(255,255,255,0.35)"/><rect x="862.7" y="762.1" width="8.95" height="0.8" fill="rgba(255,255,255,0.35)"/><rect x="862.7" y="554.5" width="8.95" height="0.8" fill="rgba(255,255,255,0.35)"/><rect x="862.7" y="550.2" width="8.95" height="0.8" fill="rgba(255,255,255,0.35)"/><rect x="862.7" y="547.6" width="8.95" height="0.8" fill="rgba(255,255,255,0.35)"/><rect x="872.8" y="817.1" width="8.95" height="0.8" fill="rgba(255,255,255,0.35)"/><rect x="872.8" y="780.1" width="8.95" height="0.8" fill="rgba(255,255,255,0.35)"/><rect x="882.8" y="828.2" width="8.95" height="0.8" fill="rgba(255,255,255,0.35)"/><rect x="892.8" y="772.0" width="8.95" height="0.8" fill="rgba(255,255,255,0.35)"/><rect x="892.8" y="618.1" width="8.95" height="0.8" fill="rgba(255,255,255,0.35)"/><rect x="892.8" y="613.8" width="8.95" height="0.8" fill="rgba(255,255,255,0.35)"/><rect x="892.8" y="545.9" width="8.95" height="0.8" fill="rgba(255,255,255,0.35)"/><rect x="902.9" y="757.8" width="8.95" height="0.8" fill="rgba(255,255,255,0.35)"/><rect x="902.9" y="629.3" width="8.95" height="0.8" fill="rgba(255,255,255,0.35)"/><rect x="902.9" y="624.1" width="8.95" height="0.8" fill="rgba(255,255,255,0.35)"/><rect x="912.9" y="767.2" width="8.95" height="0.8" fill="rgba(255,255,255,0.35)"/><rect x="912.9" y="674.8" width="8.95" height="0.8" fill="rgba(255,255,255,0.35)"/><rect x="912.9" y="667.9" width="8.95" height="0.8" fill="rgba(255,255,255,0.35)"/><rect x="922.9" y="829.9" width="8.95" height="0.8" fill="rgba(255,255,255,0.35)"/><rect x="922.9" y="762.6" width="8.95" height="0.8" fill="rgba(255,255,255,0.35)"/><rect x="922.9" y="686.8" width="8.95" height="0.8" fill="rgba(255,255,255,0.35)"/><rect x="922.9" y="679.9" width="8.95" height="0.8" fill="rgba(255,255,255,0.35)"/><rect x="933.0" y="826.6" width="8.95" height="0.8" fill="rgba(255,255,255,0.35)"/><rect x="933.0" y="768.1" width="8.95" height="0.8" fill="rgba(255,255,255,0.35)"/><rect x="933.0" y="700.2" width="8.95" height="0.8" fill="rgba(255,255,255,0.35)"/><rect x="933.0" y="695.9" width="8.95" height="0.8" fill="rgba(255,255,255,0.35)"/><rect x="933.0" y="561.4" width="8.95" height="0.8" fill="rgba(255,255,255,0.35)"/><rect x="933.0" y="559.6" width="8.95" height="0.8" fill="rgba(255,255,255,0.35)"/><rect x="943.0" y="829.1" width="8.95" height="0.8" fill="rgba(255,255,255,0.35)"/><rect x="943.0" y="816.2" width="8.95" height="0.8" fill="rgba(255,255,255,0.35)"/><rect x="943.0" y="805.0" width="8.95" height="0.8" fill="rgba(255,255,255,0.35)"/><rect x="953.0" y="829.1" width="8.95" height="0.8" fill="rgba(255,255,255,0.35)"/><rect x="953.0" y="821.4" width="8.95" height="0.8" fill="rgba(255,255,255,0.35)"/><rect x="953.0" y="817.1" width="8.95" height="0.8" fill="rgba(255,255,255,0.35)"/><rect x="963.0" y="754.4" width="8.95" height="0.8" fill="rgba(255,255,255,0.35)"/><rect x="963.0" y="690.0" width="8.95" height="0.8" fill="rgba(255,255,255,0.35)"/><rect x="963.0" y="641.9" width="8.95" height="0.8" fill="rgba(255,255,255,0.35)"/><rect x="963.0" y="638.1" width="8.95" height="0.8" fill="rgba(255,255,255,0.35)"/><rect x="963.0" y="561.4" width="8.95" height="0.8" fill="rgba(255,255,255,0.35)"/><rect x="963.0" y="557.1" width="8.95" height="0.8" fill="rgba(255,255,255,0.35)"/><rect x="973.1" y="719.0" width="8.95" height="0.8" fill="rgba(255,255,255,0.35)"/><rect x="973.1" y="650.1" width="8.95" height="0.8" fill="rgba(255,255,255,0.35)"/><rect x="973.1" y="602.6" width="8.95" height="0.8" fill="rgba(255,255,255,0.35)"/><rect x="973.1" y="596.6" width="8.95" height="0.8" fill="rgba(255,255,255,0.35)"/><rect x="983.1" y="690.9" width="8.95" height="0.8" fill="rgba(255,255,255,0.35)"/><rect x="983.1" y="623.2" width="8.95" height="0.8" fill="rgba(255,255,255,0.35)"/><rect x="983.1" y="589.9" width="8.95" height="0.8" fill="rgba(255,255,255,0.35)"/><rect x="983.1" y="584.7" width="8.95" height="0.8" fill="rgba(255,255,255,0.35)"/><rect x="983.1" y="547.8" width="8.95" height="0.8" fill="rgba(255,255,255,0.35)"/><rect x="983.1" y="545.2" width="8.95" height="0.8" fill="rgba(255,255,255,0.35)"/><rect x="993.1" y="678.9" width="8.95" height="0.8" fill="rgba(255,255,255,0.35)"/><rect x="993.1" y="616.5" width="8.95" height="0.8" fill="rgba(255,255,255,0.35)"/><rect x="993.1" y="587.3" width="8.95" height="0.8" fill="rgba(255,255,255,0.35)"/><rect x="993.1" y="581.3" width="8.95" height="0.8" fill="rgba(255,255,255,0.35)"/><rect x="993.1" y="558.9" width="8.95" height="0.8" fill="rgba(255,255,255,0.35)"/><rect x="993.1" y="556.4" width="8.95" height="0.8" fill="rgba(255,255,255,0.35)"/><rect x="1003.2" y="668.2" width="8.95" height="0.8" fill="rgba(255,255,255,0.35)"/><rect x="1003.2" y="610.5" width="8.95" height="0.8" fill="rgba(255,255,255,0.35)"/><rect x="1003.2" y="583.9" width="8.95" height="0.8" fill="rgba(255,255,255,0.35)"/><rect x="1003.2" y="577.8" width="8.95" height="0.8" fill="rgba(255,255,255,0.35)"/><rect x="1003.2" y="558.9" width="8.95" height="0.8" fill="rgba(255,255,255,0.35)"/><rect x="1013.2" y="809.6" width="8.95" height="0.8" fill="rgba(255,255,255,0.35)"/><rect x="1013.2" y="800.0" width="8.95" height="0.8" fill="rgba(255,255,255,0.35)"/><rect x="1013.2" y="794.4" width="8.95" height="0.8" fill="rgba(255,255,255,0.35)"/><rect x="1013.2" y="791.4" width="8.95" height="0.8" fill="rgba(255,255,255,0.35)"/><rect x="1023.2" y="823.7" width="8.95" height="0.8" fill="rgba(255,255,255,0.35)"/><rect x="1023.2" y="821.2" width="8.95" height="0.8" fill="rgba(255,255,255,0.35)"/><rect x="1023.2" y="815.1" width="8.95" height="0.8" fill="rgba(255,255,255,0.35)"/><rect x="1033.2" y="804.5" width="8.95" height="0.8" fill="rgba(255,255,255,0.35)"/><rect x="1033.2" y="790.9" width="8.95" height="0.8" fill="rgba(255,255,255,0.35)"/><rect x="1033.2" y="786.4" width="8.95" height="0.8" fill="rgba(255,255,255,0.35)"/><rect x="1043.3" y="630.8" width="8.95" height="0.8" fill="rgba(255,255,255,0.35)"/><rect x="1043.3" y="577.0" width="8.95" height="0.8" fill="rgba(255,255,255,0.35)"/><rect x="1043.3" y="562.4" width="8.95" height="0.8" fill="rgba(255,255,255,0.35)"/><rect x="1043.3" y="559.8" width="8.95" height="0.8" fill="rgba(255,255,255,0.35)"/><rect x="1043.3" y="552.1" width="8.95" height="0.8" fill="rgba(255,255,255,0.35)"/><rect x="1043.3" y="549.5" width="8.95" height="0.8" fill="rgba(255,255,255,0.35)"/><rect x="1053.3" y="607.9" width="8.95" height="0.8" fill="rgba(255,255,255,0.35)"/><rect x="1053.3" y="559.8" width="8.95" height="0.8" fill="rgba(255,255,255,0.35)"/><rect x="1053.3" y="543.5" width="8.95" height="0.8" fill="rgba(255,255,255,0.35)"/><rect x="1053.3" y="537.5" width="8.95" height="0.8" fill="rgba(255,255,255,0.35)"/><rect x="1053.3" y="531.5" width="8.95" height="0.8" fill="rgba(255,255,255,0.35)"/><rect x="1053.3" y="528.0" width="8.95" height="0.8" fill="rgba(255,255,255,0.35)"/><rect x="1063.3" y="588.2" width="8.95" height="0.8" fill="rgba(255,255,255,0.35)"/><rect x="1063.3" y="546.1" width="8.95" height="0.8" fill="rgba(255,255,255,0.35)"/><rect x="1063.3" y="535.8" width="8.95" height="0.8" fill="rgba(255,255,255,0.35)"/><rect x="1063.3" y="527.2" width="8.95" height="0.8" fill="rgba(255,255,255,0.35)"/><rect x="1063.3" y="520.3" width="8.95" height="0.8" fill="rgba(255,255,255,0.35)"/><rect x="1073.4" y="586.4" width="8.95" height="0.8" fill="rgba(255,255,255,0.35)"/><rect x="1073.4" y="540.9" width="8.95" height="0.8" fill="rgba(255,255,255,0.35)"/><rect x="1073.4" y="531.5" width="8.95" height="0.8" fill="rgba(255,255,255,0.35)"/><rect x="1073.4" y="526.3" width="8.95" height="0.8" fill="rgba(255,255,255,0.35)"/><rect x="1073.4" y="519.4" width="8.95" height="0.8" fill="rgba(255,255,255,0.35)"/><rect x="1073.4" y="518.6" width="8.95" height="0.8" fill="rgba(255,255,255,0.35)"/><rect x="1083.4" y="794.9" width="8.95" height="0.8" fill="rgba(255,255,255,0.35)"/><rect x="1083.4" y="786.4" width="8.95" height="0.8" fill="rgba(255,255,255,0.35)"/><rect x="1093.4" y="812.1" width="8.95" height="0.8" fill="rgba(255,255,255,0.35)"/><rect x="1093.4" y="810.6" width="8.95" height="0.8" fill="rgba(255,255,255,0.35)"/><rect x="1103.5" y="583.1" width="8.95" height="0.8" fill="rgba(255,255,255,0.35)"/><rect x="1103.5" y="556.4" width="8.95" height="0.8" fill="rgba(255,255,255,0.35)"/><rect x="1103.5" y="544.4" width="8.95" height="0.8" fill="rgba(255,255,255,0.35)"/><rect x="1103.5" y="537.6" width="8.95" height="0.8" fill="rgba(255,255,255,0.35)"/><rect x="1103.5" y="532.3" width="8.95" height="0.8" fill="rgba(255,255,255,0.35)"/><rect x="1113.5" y="591.6" width="8.95" height="0.8" fill="rgba(255,255,255,0.35)"/><rect x="1113.5" y="563.3" width="8.95" height="0.8" fill="rgba(255,255,255,0.35)"/><rect x="1113.5" y="554.7" width="8.95" height="0.8" fill="rgba(255,255,255,0.35)"/><rect x="1113.5" y="548.7" width="8.95" height="0.8" fill="rgba(255,255,255,0.35)"/><rect x="1113.5" y="544.4" width="8.95" height="0.8" fill="rgba(255,255,255,0.35)"/><rect x="1113.5" y="541.0" width="8.95" height="0.8" fill="rgba(255,255,255,0.35)"/><rect x="1123.5" y="574.5" width="8.95" height="0.8" fill="rgba(255,255,255,0.35)"/><rect x="1123.5" y="545.3" width="8.95" height="0.8" fill="rgba(255,255,255,0.35)"/><rect x="1123.5" y="539.3" width="8.95" height="0.8" fill="rgba(255,255,255,0.35)"/><rect x="1123.5" y="536.7" width="8.95" height="0.8" fill="rgba(255,255,255,0.35)"/><rect x="1123.5" y="530.6" width="8.95" height="0.8" fill="rgba(255,255,255,0.35)"/><rect x="1123.5" y="527.2" width="8.95" height="0.8" fill="rgba(255,255,255,0.35)"/><rect x="1133.5" y="536.7" width="8.95" height="0.8" fill="rgba(255,255,255,0.35)"/><rect x="1133.5" y="511.4" width="8.95" height="0.8" fill="rgba(255,255,255,0.35)"/><rect x="1133.5" y="506.6" width="8.95" height="0.8" fill="rgba(255,255,255,0.35)"/><rect x="1133.5" y="498.0" width="8.95" height="0.8" fill="rgba(255,255,255,0.35)"/><rect x="1133.5" y="494.6" width="8.95" height="0.8" fill="rgba(255,255,255,0.35)"/><rect x="1133.5" y="490.8" width="8.95" height="0.8" fill="rgba(255,255,255,0.35)"/><rect x="1143.6" y="546.1" width="8.95" height="0.8" fill="rgba(255,255,255,0.35)"/><rect x="1143.6" y="521.2" width="8.95" height="0.8" fill="rgba(255,255,255,0.35)"/><rect x="1143.6" y="517.8" width="8.95" height="0.8" fill="rgba(255,255,255,0.35)"/><rect x="1143.6" y="510.9" width="8.95" height="0.8" fill="rgba(255,255,255,0.35)"/><rect x="1143.6" y="507.5" width="8.95" height="0.8" fill="rgba(255,255,255,0.35)"/><rect x="1143.6" y="502.3" width="8.95" height="0.8" fill="rgba(255,255,255,0.35)"/><rect x="1143.6" y="498.9" width="8.95" height="0.8" fill="rgba(255,255,255,0.35)"/><rect x="1153.6" y="790.9" width="8.95" height="0.8" fill="rgba(255,255,255,0.35)"/><rect x="1153.6" y="786.4" width="8.95" height="0.8" fill="rgba(255,255,255,0.35)"/><rect x="1163.6" y="812.1" width="8.95" height="0.8" fill="rgba(255,255,255,0.35)"/><rect x="1163.6" y="810.6" width="8.95" height="0.8" fill="rgba(255,255,255,0.35)"/><rect x="1173.7" y="567.6" width="8.95" height="0.8" fill="rgba(255,255,255,0.35)"/><rect x="1173.7" y="544.4" width="8.95" height="0.8" fill="rgba(255,255,255,0.35)"/><rect x="1173.7" y="538.4" width="8.95" height="0.8" fill="rgba(255,255,255,0.35)"/><rect x="1173.7" y="530.7" width="8.95" height="0.8" fill="rgba(255,255,255,0.35)"/><rect x="1173.7" y="526.4" width="8.95" height="0.8" fill="rgba(255,255,255,0.35)"/><rect x="1173.7" y="523.4" width="8.95" height="0.8" fill="rgba(255,255,255,0.35)"/><rect x="1183.7" y="557.3" width="8.95" height="0.8" fill="rgba(255,255,255,0.35)"/><rect x="1183.7" y="535.0" width="8.95" height="0.8" fill="rgba(255,255,255,0.35)"/><rect x="1183.7" y="529.8" width="8.95" height="0.8" fill="rgba(255,255,255,0.35)"/><rect x="1183.7" y="506.6" width="8.95" height="0.8" fill="rgba(255,255,255,0.35)"/><rect x="1183.7" y="504.9" width="8.95" height="0.8" fill="rgba(255,255,255,0.35)"/><rect x="1183.7" y="499.7" width="8.95" height="0.8" fill="rgba(255,255,255,0.35)"/><rect x="1183.7" y="495.4" width="8.95" height="0.8" fill="rgba(255,255,255,0.35)"/><rect x="1193.7" y="529.8" width="8.95" height="0.8" fill="rgba(255,255,255,0.35)"/><rect x="1193.7" y="509.2" width="8.95" height="0.8" fill="rgba(255,255,255,0.35)"/><rect x="1193.7" y="504.9" width="8.95" height="0.8" fill="rgba(255,255,255,0.35)"/><rect x="1193.7" y="468.0" width="8.95" height="0.8" fill="rgba(255,255,255,0.35)"/><rect x="1193.7" y="464.5" width="8.95" height="0.8" fill="rgba(255,255,255,0.35)"/><rect x="1193.7" y="457.6" width="8.95" height="0.8" fill="rgba(255,255,255,0.35)"/><rect x="1193.7" y="455.9" width="8.95" height="0.8" fill="rgba(255,255,255,0.35)"/><rect x="1203.8" y="568.5" width="8.95" height="0.8" fill="rgba(255,255,255,0.35)"/><rect x="1203.8" y="547.0" width="8.95" height="0.8" fill="rgba(255,255,255,0.35)"/><rect x="1203.8" y="543.6" width="8.95" height="0.8" fill="rgba(255,255,255,0.35)"/><rect x="1203.8" y="490.3" width="8.95" height="0.8" fill="rgba(255,255,255,0.35)"/><rect x="1203.8" y="486.0" width="8.95" height="0.8" fill="rgba(255,255,255,0.35)"/><rect x="1203.8" y="479.1" width="8.95" height="0.8" fill="rgba(255,255,255,0.35)"/><rect x="1203.8" y="474.0" width="8.95" height="0.8" fill="rgba(255,255,255,0.35)"/><rect x="1213.8" y="571.0" width="8.95" height="0.8" fill="rgba(255,255,255,0.35)"/><rect x="1213.8" y="553.0" width="8.95" height="0.8" fill="rgba(255,255,255,0.35)"/><rect x="1213.8" y="547.0" width="8.95" height="0.8" fill="rgba(255,255,255,0.35)"/><rect x="1213.8" y="489.4" width="8.95" height="0.8" fill="rgba(255,255,255,0.35)"/><rect x="1213.8" y="480.8" width="8.95" height="0.8" fill="rgba(255,255,255,0.35)"/><rect x="1213.8" y="479.1" width="8.95" height="0.8" fill="rgba(255,255,255,0.35)"/><rect x="1223.8" y="794.9" width="8.95" height="0.8" fill="rgba(255,255,255,0.35)"/><rect x="1223.8" y="787.9" width="8.95" height="0.8" fill="rgba(255,255,255,0.35)"/><rect x="1223.8" y="785.2" width="8.95" height="0.8" fill="rgba(255,255,255,0.35)"/><rect x="1223.8" y="765.9" width="8.95" height="0.8" fill="rgba(255,255,255,0.35)"/><rect x="1223.8" y="763.8" width="8.95" height="0.8" fill="rgba(255,255,255,0.35)"/><rect x="1233.8" y="812.6" width="8.95" height="0.8" fill="rgba(255,255,255,0.35)"/><rect x="1233.8" y="809.4" width="8.95" height="0.8" fill="rgba(255,255,255,0.35)"/><rect x="1233.8" y="798.6" width="8.95" height="0.8" fill="rgba(255,255,255,0.35)"/><rect x="1243.9" y="611.4" width="8.95" height="0.8" fill="rgba(255,255,255,0.35)"/><rect x="1243.9" y="591.6" width="8.95" height="0.8" fill="rgba(255,255,255,0.35)"/><rect x="1243.9" y="587.4" width="8.95" height="0.8" fill="rgba(255,255,255,0.35)"/><rect x="1243.9" y="449.8" width="8.95" height="0.8" fill="rgba(255,255,255,0.35)"/><rect x="1243.9" y="447.2" width="8.95" height="0.8" fill="rgba(255,255,255,0.35)"/><rect x="1243.9" y="435.6" width="8.95" height="0.8" fill="rgba(255,255,255,0.35)"/><rect x="1243.9" y="433.1" width="8.95" height="0.8" fill="rgba(255,255,255,0.35)"/><rect x="1253.9" y="564.6" width="8.95" height="0.8" fill="rgba(255,255,255,0.35)"/><rect x="1253.9" y="543.9" width="8.95" height="0.8" fill="rgba(255,255,255,0.35)"/><rect x="1253.9" y="540.0" width="8.95" height="0.8" fill="rgba(255,255,255,0.35)"/><rect x="1253.9" y="375.1" width="8.95" height="0.8" fill="rgba(255,255,255,0.35)"/><rect x="1253.9" y="369.9" width="8.95" height="0.8" fill="rgba(255,255,255,0.35)"/><rect x="1253.9" y="357.5" width="8.95" height="0.8" fill="rgba(255,255,255,0.35)"/><rect x="1263.9" y="599.6" width="8.95" height="0.8" fill="rgba(255,255,255,0.35)"/><rect x="1263.9" y="579.6" width="8.95" height="0.8" fill="rgba(255,255,255,0.35)"/><rect x="1263.9" y="575.6" width="8.95" height="0.8" fill="rgba(255,255,255,0.35)"/><rect x="1263.9" y="336.6" width="8.95" height="0.8" fill="rgba(255,255,255,0.35)"/><rect x="1263.9" y="334.1" width="8.95" height="0.8" fill="rgba(255,255,255,0.35)"/><rect x="1263.9" y="323.6" width="8.95" height="0.8" fill="rgba(255,255,255,0.35)"/><rect x="1263.9" y="322.0" width="8.95" height="0.8" fill="rgba(255,255,255,0.35)"/><rect x="1274.0" y="589.6" width="8.95" height="0.8" fill="rgba(255,255,255,0.35)"/><rect x="1274.0" y="569.6" width="8.95" height="0.8" fill="rgba(255,255,255,0.35)"/><rect x="1274.0" y="565.6" width="8.95" height="0.8" fill="rgba(255,255,255,0.35)"/><rect x="1274.0" y="276.1" width="8.95" height="0.8" fill="rgba(255,255,255,0.35)"/><rect x="1274.0" y="274.5" width="8.95" height="0.8" fill="rgba(255,255,255,0.35)"/><rect x="1274.0" y="256.8" width="8.95" height="0.8" fill="rgba(255,255,255,0.35)"/><rect x="1274.0" y="254.4" width="8.95" height="0.8" fill="rgba(255,255,255,0.35)"/><rect x="1284.0" y="579.6" width="8.95" height="0.8" fill="rgba(255,255,255,0.35)"/><rect x="1284.0" y="559.6" width="8.95" height="0.8" fill="rgba(255,255,255,0.35)"/><rect x="1284.0" y="555.6" width="8.95" height="0.8" fill="rgba(255,255,255,0.35)"/><rect x="1284.0" y="260.0" width="8.95" height="0.8" fill="rgba(255,255,255,0.35)"/><rect x="1284.0" y="256.0" width="8.95" height="0.8" fill="rgba(255,255,255,0.35)"/><rect x="1284.0" y="241.5" width="8.95" height="0.8" fill="rgba(255,255,255,0.35)"/><rect x="1294.0" y="785.8" width="8.95" height="0.8" fill="rgba(255,255,255,0.35)"/><rect x="1294.0" y="784.3" width="8.95" height="0.8" fill="rgba(255,255,255,0.35)"/><rect x="1294.0" y="742.9" width="8.95" height="0.8" fill="rgba(255,255,255,0.35)"/><rect x="1294.0" y="741.4" width="8.95" height="0.8" fill="rgba(255,255,255,0.35)"/><rect x="1294.0" y="735.4" width="8.95" height="0.8" fill="rgba(255,255,255,0.35)"/><rect x="1304.1" y="812.8" width="8.95" height="0.8" fill="rgba(255,255,255,0.35)"/><rect x="1304.1" y="811.6" width="8.95" height="0.8" fill="rgba(255,255,255,0.35)"/><rect x="1304.1" y="791.8" width="8.95" height="0.8" fill="rgba(255,255,255,0.35)"/><rect x="1304.1" y="784.3" width="8.95" height="0.8" fill="rgba(255,255,255,0.35)"/><text x="383.5" y="836.0" text-anchor="end" font-size="9.5" fill="#646a77">0</text><text x="383.5" y="782.3" text-anchor="end" font-size="9.5" fill="#646a77">1,000</text><text x="383.5" y="728.7" text-anchor="end" font-size="9.5" fill="#646a77">2,000</text><text x="383.5" y="675.0" text-anchor="end" font-size="9.5" fill="#646a77">3,000</text><text x="383.5" y="621.4" text-anchor="end" font-size="9.5" fill="#646a77">4,000</text><text x="383.5" y="567.7" text-anchor="end" font-size="9.5" fill="#646a77">5,000</text><text x="383.5" y="514.0" text-anchor="end" font-size="9.5" fill="#646a77">6,000</text><text x="383.5" y="460.4" text-anchor="end" font-size="9.5" fill="#646a77">7,000</text><text x="383.5" y="406.7" text-anchor="end" font-size="9.5" fill="#646a77">8,000</text><text x="383.5" y="353.1" text-anchor="end" font-size="9.5" fill="#646a77">9,000</text><text x="383.5" y="299.4" text-anchor="end" font-size="9.5" fill="#646a77">10,000</text><text x="383.5" y="245.7" text-anchor="end" font-size="9.5" fill="#646a77">11,000</text><text x="461.2" y="850.2" text-anchor="middle" font-size="10" fill="#646a77">2025-07-06</text><text x="531.3" y="850.2" text-anchor="middle" font-size="10" fill="#646a77">2025-07-13</text><text x="601.4" y="850.2" text-anchor="middle" font-size="10" fill="#646a77">2025-07-20</text><text x="671.6" y="850.2" text-anchor="middle" font-size="10" fill="#646a77">2025-07-27</text><text x="741.7" y="850.2" text-anchor="middle" font-size="10" fill="#646a77">2025-08-03</text><text x="811.9" y="850.2" text-anchor="middle" font-size="10" fill="#646a77">2025-08-10</text><text x="882.0" y="850.2" text-anchor="middle" font-size="10" fill="#646a77">2025-08-17</text><text x="952.1" y="850.2" text-anchor="middle" font-size="10" fill="#646a77">2025-08-24</text><text x="1022.3" y="850.2" text-anchor="middle" font-size="10" fill="#646a77">2025-08-31</text><text x="1092.4" y="850.2" text-anchor="middle" font-size="10" fill="#646a77">2025-09-07</text><text x="1162.6" y="850.2" text-anchor="middle" font-size="10" fill="#646a77">2025-09-14</text><text x="1232.7" y="850.2" text-anchor="middle" font-size="10" fill="#646a77">2025-09-21</text><text x="1302.8" y="850.2" text-anchor="middle" font-size="10" fill="#646a77">2025-09-28</text><text x="858" y="877" text-anchor="middle" font-size="11" font-weight="700" fill="#343741">@timestamp per day</text><text transform="translate(336.2 533.7) rotate(-90)" text-anchor="middle" font-size="11" font-weight="700" fill="#343741">Count</text><circle cx="1369.2" cy="240.9" r="3.5" fill="#A5D4C9"/><text x="1379.7" y="244.4" font-size="10.2" fill="#4a4f5a">Other</text><rect x="1424.4" y="236.3" width="2.4" height="2.4" fill="none" stroke="#4a4f5a" stroke-width="0.8"/><rect x="1424.4" y="240.2" width="2.4" height="2.4" fill="none" stroke="#4a4f5a" stroke-width="0.8"/><rect x="1424.4" y="244.1" width="2.4" height="2.4" fill="none" stroke="#4a4f5a" stroke-width="0.8"/><circle cx="1369.2" cy="260.7" r="3.5" fill="#E7664C"/><text x="1379.7" y="264.2" font-size="10.2" fill="#4a4f5a">16.7.11</text><rect x="1424.4" y="256.1" width="2.4" height="2.4" fill="none" stroke="#4a4f5a" stroke-width="0.8"/><rect x="1424.4" y="260.0" width="2.4" height="2.4" fill="none" stroke="#4a4f5a" stroke-width="0.8"/><rect x="1424.4" y="263.9" width="2.4" height="2.4" fill="none" stroke="#4a4f5a" stroke-width="0.8"/><circle cx="1369.2" cy="280.5" r="3.5" fill="#AA6556"/><text x="1379.7" y="284.0" font-size="10.2" fill="#4a4f5a">17.6.1</text><rect x="1424.4" y="275.9" width="2.4" height="2.4" fill="none" stroke="#4a4f5a" stroke-width="0.8"/><rect x="1424.4" y="279.8" width="2.4" height="2.4" fill="none" stroke="#4a4f5a" stroke-width="0.8"/><rect x="1424.4" y="283.7" width="2.4" height="2.4" fill="none" stroke="#4a4f5a" stroke-width="0.8"/><circle cx="1369.2" cy="300.3" r="3.5" fill="#DA8B45"/><text x="1379.7" y="303.8" font-size="10.2" fill="#4a4f5a">15.8.4</text><rect x="1424.4" y="295.7" width="2.4" height="2.4" fill="none" stroke="#4a4f5a" stroke-width="0.8"/><rect x="1424.4" y="299.6" width="2.4" height="2.4" fill="none" stroke="#4a4f5a" stroke-width="0.8"/><rect x="1424.4" y="303.5" width="2.4" height="2.4" fill="none" stroke="#4a4f5a" stroke-width="0.8"/><circle cx="1369.2" cy="320.1" r="3.5" fill="#B9A888"/><text x="1379.7" y="323.6" font-size="10.2" fill="#4a4f5a">18.4.1</text><rect x="1424.4" y="315.5" width="2.4" height="2.4" fill="none" stroke="#4a4f5a" stroke-width="0.8"/><rect x="1424.4" y="319.4" width="2.4" height="2.4" fill="none" stroke="#4a4f5a" stroke-width="0.8"/><rect x="1424.4" y="323.3" width="2.4" height="2.4" fill="none" stroke="#4a4f5a" stroke-width="0.8"/><circle cx="1369.2" cy="339.9" r="3.5" fill="#D6BF57"/><text x="1379.7" y="343.4" font-size="10.2" fill="#4a4f5a">18.7</text><rect x="1424.4" y="335.3" width="2.4" height="2.4" fill="none" stroke="#4a4f5a" stroke-width="0.8"/><rect x="1424.4" y="339.2" width="2.4" height="2.4" fill="none" stroke="#4a4f5a" stroke-width="0.8"/><rect x="1424.4" y="343.1" width="2.4" height="2.4" fill="none" stroke="#4a4f5a" stroke-width="0.8"/><circle cx="1369.2" cy="359.7" r="3.5" fill="#CA8EAE"/><text x="1379.7" y="363.2" font-size="10.2" fill="#4a4f5a">18.6.1</text><rect x="1424.4" y="355.1" width="2.4" height="2.4" fill="none" stroke="#4a4f5a" stroke-width="0.8"/><rect x="1424.4" y="359.0" width="2.4" height="2.4" fill="none" stroke="#4a4f5a" stroke-width="0.8"/><rect x="1424.4" y="362.9" width="2.4" height="2.4" fill="none" stroke="#4a4f5a" stroke-width="0.8"/><circle cx="1369.2" cy="379.5" r="3.5" fill="#9170B8"/><text x="1379.7" y="383.0" font-size="10.2" fill="#4a4f5a">26.0</text><rect x="1424.4" y="374.9" width="2.4" height="2.4" fill="none" stroke="#4a4f5a" stroke-width="0.8"/><rect x="1424.4" y="378.8" width="2.4" height="2.4" fill="none" stroke="#4a4f5a" stroke-width="0.8"/><rect x="1424.4" y="382.7" width="2.4" height="2.4" fill="none" stroke="#4a4f5a" stroke-width="0.8"/><circle cx="1369.2" cy="399.3" r="3.5" fill="#D36086"/><text x="1379.7" y="402.8" font-size="10.2" fill="#4a4f5a">18.6</text><rect x="1424.4" y="394.7" width="2.4" height="2.4" fill="none" stroke="#4a4f5a" stroke-width="0.8"/><rect x="1424.4" y="398.6" width="2.4" height="2.4" fill="none" stroke="#4a4f5a" stroke-width="0.8"/><rect x="1424.4" y="402.5" width="2.4" height="2.4" fill="none" stroke="#4a4f5a" stroke-width="0.8"/><circle cx="1369.2" cy="419.1" r="3.5" fill="#6092C0"/><text x="1379.7" y="422.6" font-size="10.2" fill="#4a4f5a">18.5</text><rect x="1424.4" y="414.5" width="2.4" height="2.4" fill="none" stroke="#4a4f5a" stroke-width="0.8"/><rect x="1424.4" y="418.4" width="2.4" height="2.4" fill="none" stroke="#4a4f5a" stroke-width="0.8"/><rect x="1424.4" y="422.3" width="2.4" height="2.4" fill="none" stroke="#4a4f5a" stroke-width="0.8"/><circle cx="1369.2" cy="438.9" r="3.5" fill="#54B399"/><text x="1379.7" y="442.4" font-size="10.2" fill="#4a4f5a">18.6.2</text><rect x="1424.4" y="434.3" width="2.4" height="2.4" fill="none" stroke="#4a4f5a" stroke-width="0.8"/><rect x="1424.4" y="438.2" width="2.4" height="2.4" fill="none" stroke="#4a4f5a" stroke-width="0.8"/><rect x="1424.4" y="442.1" width="2.4" height="2.4" fill="none" stroke="#4a4f5a" stroke-width="0.8"/></svg>
<div class="tt"><div class="tth">2025-09-22</div><div class="ttd"></div><div class="ttr" style="top:27.8px"><i style="background:#A5D4C9"></i><span class="n">Other</span><span class="v">75</span></div><div class="ttr" style="top:49.4px"><i style="background:#E7664C"></i><span class="n">16.7.11</span><span class="v">1</span></div><div class="ttr" style="top:70.9px"><i style="background:#AA6556"></i><span class="n">17.6.1</span><span class="v">1</span></div><div class="ttr" style="top:92.4px"><i style="background:#DA8B45"></i><span class="n">15.8.4</span><span class="v">43</span></div><div class="ttr" style="top:114.0px"><i style="background:#B9A888"></i><span class="n">18.4.1</span><span class="v">38</span></div><div class="ttr" style="top:135.6px"><i style="background:#D6BF57"></i><span class="n">18.7</span><span class="v">169</span></div><div class="ttr" style="top:157.1px"><i style="background:#CA8EAE"></i><span class="n">18.6.1</span><span class="v">54</span></div><div class="ttr hl" style="top:178.7px"><i style="background:#9170B8"></i><span class="n">26.0</span><span class="v">2,566</span></div><div class="ttr" style="top:200.2px"><i style="background:#D36086"></i><span class="n">18.6</span><span class="v">77</span></div><div class="ttr" style="top:221.8px"><i style="background:#6092C0"></i><span class="n">18.5</span><span class="v">370</span></div><div class="ttr" style="top:243.3px"><i style="background:#54B399"></i><span class="n">18.6.2</span><span class="v">4,122</span></div></div>
<div class="redbox"></div>

<!-- suggestions -->
<svg style="position:absolute;left:309px;top:920px" width="10" height="14"><path d="M2.5 2 L7.5 7 L2.5 12" stroke="#343741" stroke-width="1.1" fill="none"/></svg>
<div class="a" style="left:328.5px;top:919.5px;font-size:13px;font-weight:700;color:#343741">Suggestions</div>

<div style="position:absolute;left:289px;top:906px;width:1494px;height:25px;background:linear-gradient(rgba(190,196,208,0),rgba(190,196,208,.12));z-index:5"></div>
<div id="right">
  <div style="position:absolute;left:14.2px;top:14px;width:320px;height:435.5px;background:#f1f4f8;border:1px solid #d5d9e1;border-radius:4px;box-shadow:0 1px 2px rgba(0,0,0,.06)"></div>
  <div style="position:absolute;left:15.2px;top:15px;width:320px;height:94.4px;background:#fff;border-bottom:1px solid #d5d9e1;border-radius:4px 0 0 0"></div>
  <div style="position:absolute;left:30.6px;top:29.6px;width:300px;height:28.1px;background:#fff;border:1px solid #d5d9e1;border-radius:4px"></div>
  <svg style="position:absolute;left:41.8px;top:37px" width="16" height="14">
    <g fill="#54B399"><rect x="0.5" y="4" width="2.6" height="2"/><rect x="4.3" y="1" width="2.6" height="2.8"/><rect x="8.1" y="2" width="2.6" height="2.6"/><rect x="11.8" y="1" width="2.6" height="2.8"/></g>
    <g fill="#69707d"><rect x="0.5" y="6.8" width="2.6" height="5.5"/><rect x="4.3" y="4.6" width="2.6" height="7.7"/><rect x="8.1" y="5.4" width="2.6" height="6.9"/><rect x="11.8" y="7.6" width="2.6" height="4.7"/></g>
  </svg>
  <div class="a" style="left:63.3px;top:36.5px;font-size:12.65px;font-weight:700;color:#343741">Bar vertical stacked</div>
  <div style="position:absolute;left:30.6px;top:65.5px;width:300px;height:28px;background:#fff;border:1px solid #d5d9e1;border-radius:4px"></div>
  <div class="a" style="left:41.8px;top:71.3px;font-size:13.6px;letter-spacing:0.45px;color:#343741">*:*-epmon-mthor-cdr*</div>
  <div class="a" style="left:30px;top:125.2px;font-size:10.7px;font-weight:700;color:#1a1c21">Horizontal axis</div>
  <div class="card" style="left:30.2px;top:154.9px;width:300px;height:36px;box-shadow:0 1px 1px rgba(0,0,0,.08)"></div>
  <div class="a" style="left:38px;top:163.7px;font-size:13.25px;color:#36678f">@timestamp</div>
  <div style="position:absolute;left:14.2px;top:205px;width:320px;height:1px;background:#d5d9e1"></div>
  <div class="a" style="left:30px;top:221.2px;font-size:10.7px;font-weight:700;color:#1a1c21">Vertical axis</div>
  <div class="card" style="left:30.2px;top:251.5px;width:300px;height:35.1px;box-shadow:0 1px 1px rgba(0,0,0,.08)"></div>
  <svg style="position:absolute;left:38.5px;top:262.5px" width="11" height="11"><rect x="1" y="1" width="8.5" height="8.5" rx="1.5" fill="none" stroke="#69707d" stroke-width="1"/><path d="M2 8.5 L8.5 2" stroke="#69707d" stroke-width="1"/></svg>
  <div class="a" style="left:56.5px;top:259.7px;font-size:13px;color:#36678f">Count</div>
  <div style="position:absolute;left:30.2px;top:302.5px;width:300px;height:35.1px;border:1px dashed #c2cad8;border-radius:4px"></div>
  <svg style="position:absolute;left:38.7px;top:311.7px" width="14" height="14"><circle cx="7" cy="7" r="6.6" fill="#69707d"/><path d="M7 3.8 V10.2 M3.8 7 H10.2" stroke="#fff" stroke-width="1.4"/></svg>
  <div class="a" style="left:61px;top:310.5px;font-size:13.57px;color:#69707d">Add or drag-and-drop a field</div>
  <div style="position:absolute;left:14.2px;top:352.6px;width:320px;height:1px;background:#d5d9e1"></div>
  <div class="a" style="left:30px;top:368.2px;font-size:10.7px;font-weight:700;color:#1a1c21">Break down by</div>
  <div class="card" style="left:30.2px;top:398.2px;width:300px;height:34.4px;box-shadow:0 1px 1px rgba(0,0,0,.08)"></div>
  <svg style="position:absolute;left:38.5px;top:408.5px" width="10" height="13"><path d="M2 1 H8 V5.5 H2 Z M2 3.5 H8 M4 1 V3.5 M6 1 V3.5 M2.8 5.5 V7 H7.2 V5.5 M4.2 7 V11 H5.8 V7" stroke="#343741" stroke-width="0.85" fill="none"/></svg>
  <div class="a" style="left:57.4px;top:406px;font-size:13.1px;color:#36678f">Top values of meta.os_version</div>
  <div style="position:absolute;left:31px;top:429.8px;width:300px;height:2.8px;background:linear-gradient(90deg,#54B399 0 33.4px,#6092C0 33.4px 66px,#D36086 66px 102px,#9170B8 102px 133.5px,#CA8EAE 133.5px 166px,#D6BF57 166px 201px,#B9A888 201px 235.4px,#DA8B45 235.4px 267.8px,#AA6556 267.8px 300px);border-radius:0 0 0 3px"></div>
  <div style="position:absolute;left:14.2px;top:464px;width:320px;height:35.5px;background:#69707d;border-radius:4px"></div>
  <svg style="position:absolute;left:1621.5px;top:475px;left:154.5px" width="15" height="15"><path d="M7 1.5 L13 4.5 L7 7.5 L1 4.5 Z M1 7.3 L7 10.3 L13 7.3 M1 10 L7 13 L13 10" stroke="#fff" stroke-width="1" fill="none"/></svg>
  <div class="a" style="left:177.2px;top:474px;font-size:15px;color:#fff">Add layer</div>
</div>

</body></html>
